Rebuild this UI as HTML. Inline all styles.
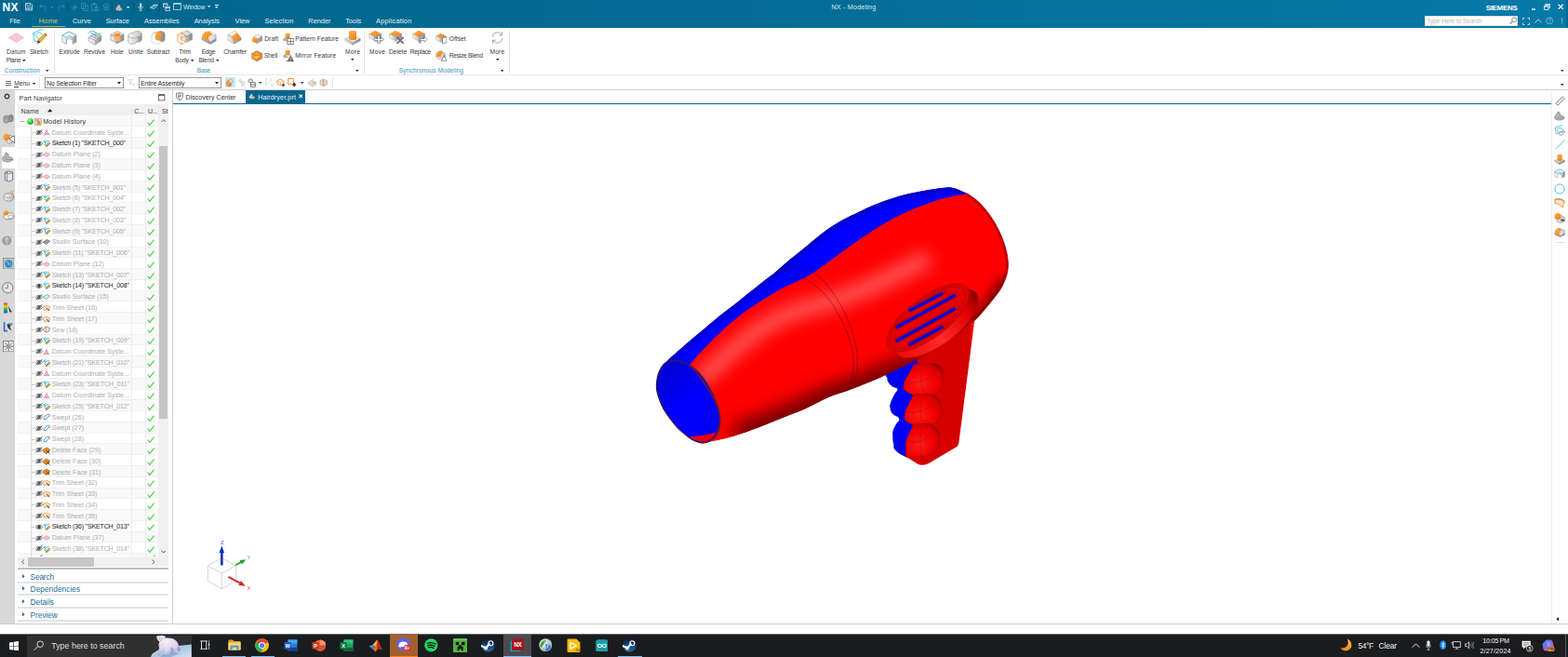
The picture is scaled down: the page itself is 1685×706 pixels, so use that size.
<!DOCTYPE html>
<html lang="en"><head><meta charset="utf-8"><title>NX - Modeling</title>
<style>
html,body{margin:0;padding:0}
body{width:1685px;height:706px;position:relative;overflow:hidden;background:#fff;font-family:"Liberation Sans",sans-serif;-webkit-font-smoothing:antialiased}
.a{position:absolute;display:block}
.t{position:absolute;white-space:nowrap;display:block}
</style></head>
<body>
<!-- top -->
<div class="a" style="left:0;top:0;width:1685px;height:30px;background:linear-gradient(90deg,#03678e 0%,#046b94 45%,#0679a7 100%)"></div>
<div class="a" style="left:1683px;top:0px;width:2.00px;height:30.00px;background:#04668c;"></div>
<span class="t" style="left:2.60px;top:1px;font-size:12px;color:#fff;font-weight:bold;letter-spacing:0.320px;">NX</span>
<div class="a" style="left:22.700000000000003px;top:2.6px;width:0.80px;height:9.80px;background:rgba(0,40,60,.32);"></div>
<div class="a" style="left:38.4px;top:2.6px;width:0.80px;height:9.80px;background:rgba(0,40,60,.32);"></div>
<div class="a" style="left:72.19999999999999px;top:2.6px;width:0.80px;height:9.80px;background:rgba(0,40,60,.32);"></div>
<div class="a" style="left:120.39999999999999px;top:2.6px;width:0.80px;height:9.80px;background:rgba(0,40,60,.32);"></div>
<div class="a" style="left:143.0px;top:2.6px;width:0.80px;height:9.80px;background:rgba(0,40,60,.32);"></div>
<div class="a" style="left:157.79999999999998px;top:2.6px;width:0.80px;height:9.80px;background:rgba(0,40,60,.32);"></div>
<div class="a" style="left:171.29999999999998px;top:2.6px;width:0.80px;height:9.80px;background:rgba(0,40,60,.32);"></div>
<svg class="a" style="left:27.4px;top:3.4px;" width="8" height="8.4" viewBox="0 0 8 8.4"><path d="M0.5 0.5H6L7.5 2V7.9H0.5Z" fill="none" stroke="#cfe4ee" stroke-width=".8"/><path d="M2 0.6V3H5.6V0.6M1.8 7.8V5H6.2V7.8" fill="none" stroke="#cfe4ee" stroke-width=".7"/><rect x="3.2" y="5.8" width="1.6" height="1.2" fill="#cfe4ee"/></svg>
<svg class="a" style="left:42px;top:3.6px;" width="8" height="8" viewBox="0 0 8 8"><path d="M2.6 0.8L0.8 2.8L2.8 4.6M0.8 2.8H4.6C8 2.8 8 7.2 4.6 7.2" fill="none" stroke="#3c8fb0" stroke-width=".8"/></svg>
<svg class="a" style="left:54.10px;top:6.65px" width="3" height="1.90" viewBox="0 0 10 6"><path d="M0 0H10L5 6Z" fill="#3c8fb0"/></svg>
<svg class="a" style="left:61.6px;top:3.6px;" width="8" height="8" viewBox="0 0 8 8"><path d="M5.4 0.8L7.2 2.8L5.2 4.6M7.2 2.8H3.4C0 2.8 0 7.2 3.4 7.2" fill="none" stroke="#3c8fb0" stroke-width=".8"/></svg>
<svg class="a" style="left:75.6px;top:3.6px;" width="8.4" height="8.4" viewBox="0 0 8.4 8.4"><path d="M0.6 4H7.8M4.2 0.8V7.6M2 6.6L6.4 1.6" fill="none" stroke="#3c8fb0" stroke-width=".8"/></svg>
<svg class="a" style="left:87px;top:3.2px;" width="8.4" height="9" viewBox="0 0 8.4 9"><path d="M0.5 0.5H5V6.4H0.5ZM2.8 2.6H7.6V8.5H2.8Z" fill="none" stroke="#3c8fb0" stroke-width=".8"/></svg>
<svg class="a" style="left:98px;top:3.2px;" width="8.6" height="9" viewBox="0 0 8.6 9"><path d="M0.5 1.4H5.6V8.4H0.5ZM2 0.5H4.2V2H2ZM4 4.4H6.6L8 5.8V8.6H4Z" fill="none" stroke="#3c8fb0" stroke-width=".8"/></svg>
<svg class="a" style="left:109.6px;top:3.4px;" width="8.6" height="8.8" viewBox="0 0 8.6 8.8"><path d="M4.2 0.6L7.8 3.2L4.2 5.6L0.6 3.2ZM2 4.6V7.6H7V4.6M4.2 2.2V8" fill="none" stroke="#3c8fb0" stroke-width=".8"/></svg>
<svg class="a" style="left:123.6px;top:3.6px;" width="8" height="8" viewBox="0 0 8 8"><path d="M1 4.6C1.6 3 3 2.6 3.4 0.8C5 1 5.6 2.6 5 4C6.6 4.2 7.6 5.4 7.4 6.4C6 7.8 2.4 7.8 0.8 6.6C0.4 6 0.6 5.2 1 4.6Z" fill="#c9c4c0" stroke="#8e8a88" stroke-width=".5"/><path d="M2.6 5.2C4 6 6 6 7.2 5.6" stroke="#8e8a88" stroke-width=".5" fill="none"/></svg>
<svg class="a" style="left:136.10px;top:6.55px" width="3.4" height="2.10" viewBox="0 0 10 6"><path d="M0 0H10L5 6Z" fill="#e8f2f6"/></svg>
<svg class="a" style="left:147.6px;top:3.2px;" width="6.2" height="9.2" viewBox="0 0 6.2 9.2"><rect x="1.9" y="0.4" width="2.4" height="5" rx="1.2" fill="#cfe4ee"/><path d="M0.6 3.8C0.6 7.4 5.6 7.4 5.6 3.8M3.1 6.6V8.4M1.6 8.6H4.6" fill="none" stroke="#cfe4ee" stroke-width=".7"/></svg>
<svg class="a" style="left:160.8px;top:4.4px;" width="9" height="6.4" viewBox="0 0 9 6.4"><path d="M0.6 4L4.6 1.2H8.4L4.6 5.4ZM3 3.6L6 1.4" fill="none" stroke="#cfe4ee" stroke-width=".9"/></svg>
<svg class="a" style="left:175px;top:3.2px;" width="8.4" height="9" viewBox="0 0 8.4 9"><path d="M0.5 0.8H5V4.6H0.5ZM0.5 1.8H5M2.8 5.2V8.4H7.8V4.2H5.6" fill="none" stroke="#cfe4ee" stroke-width=".8"/><path d="M2.8 5.3H7.8" stroke="#cfe4ee" stroke-width="1.2"/></svg>
<svg class="a" style="left:185.8px;top:3px;" width="9" height="8" viewBox="0 0 9 8"><path d="M0.5 0.6H8.4V7.4H0.5Z" fill="none" stroke="#cfe4ee" stroke-width=".8"/><path d="M0.5 1H8.4" stroke="#cfe4ee" stroke-width="1.3"/></svg>
<svg class="a" style="left:223.30px;top:6.35px" width="3.4" height="2.10" viewBox="0 0 10 6"><path d="M0 0H10L5 6Z" fill="#d4e8f0"/></svg>
<div class="a" style="left:230.6px;top:5.2px;width:4.20px;height:0.70px;background:#e8f2f6;"></div>
<svg class="a" style="left:231.00px;top:6.95px" width="3.4" height="2.10" viewBox="0 0 10 6"><path d="M0 0H10L5 6Z" fill="#e8f2f6"/></svg>
<div class="a" style="left:1646.2px;top:9.4px;width:3.80px;height:1.20px;background:#a9cddd;"></div>
<svg class="a" style="left:1658.6px;top:3.6px;" width="7" height="7" viewBox="0 0 7 7"><path d="M0.5 2.4H5V6.4H0.5ZM1.8 2.2V0.6H6.4V4.6H5.2" fill="none" stroke="#e4f0f5" stroke-width=".9"/><path d="M0.5 2.8H5M1.8 0.9H6.4" stroke="#e4f0f5" stroke-width="1.2"/></svg>
<svg class="a" style="left:1674px;top:4px;" width="6.4" height="6.4" viewBox="0 0 6.4 6.4"><path d="M0.6 0.6L5.8 5.8M5.8 0.6L0.6 5.8" stroke="#fff" stroke-width="1.2"/></svg>
<svg class="a" style="left:1636px;top:18.6px;" width="8" height="8" viewBox="0 0 8 8"><path d="M0.5 2.4V0.5H2.4M5.6 0.5H7.5V2.4M7.5 5.6V7.5H5.6M2.4 7.5H0.5V5.6" fill="none" stroke="#cfe4ee" stroke-width=".9"/></svg>
<svg class="a" style="left:1648.6px;top:19.8px;" width="8.4" height="5" viewBox="0 0 8.4 5"><path d="M0.6 4.4L4.2 0.8L7.8 4.4" fill="none" stroke="#cfe4ee" stroke-width=".9"/></svg>
<svg class="a" style="left:1661px;top:18.4px;" width="8.4" height="8.4" viewBox="0 0 8.4 8.4"><circle cx="4.2" cy="4.2" r="3.5" fill="none" stroke="#86bbd3" stroke-width=".8"/><path d="M3 3.4C3 1.8 5.4 1.8 5.4 3.3C5.4 4.2 4.2 4.2 4.2 5.2M4.2 6V6.8" fill="none" stroke="#86bbd3" stroke-width=".8"/></svg>
<div class="a" style="left:1677.7px;top:18.6px;width:1.00px;height:5.40px;background:#6fb0cc;"></div>
<div class="a" style="left:1677.7px;top:25px;width:1.00px;height:1.20px;background:#6fb0cc;"></div>
<span class="t" style="left:197.00px;top:4px;font-size:6.8px;color:#d4e8f0;letter-spacing:-0.162px;">Window</span>
<span class="t" style="left:893.40px;top:3px;font-size:7.2px;color:#dcebf2;letter-spacing:0.199px;">NX - Modeling</span>
<span class="t" style="left:1596.66px;top:4px;font-size:8px;color:#fff;font-weight:bold;letter-spacing:-0.320px;">SIEMENS</span>
<span class="t" style="left:10.20px;top:18px;font-size:7.4px;color:#e6f1f6;letter-spacing:-0.111px;">File</span>
<span class="t" style="left:41.80px;top:18px;font-size:7.4px;color:#d9ca62;letter-spacing:0.220px;">Home</span>
<span class="t" style="left:77.90px;top:18px;font-size:7.4px;color:#e6f1f6;letter-spacing:0.090px;">Curve</span>
<span class="t" style="left:113.70px;top:18px;font-size:7.4px;color:#e6f1f6;letter-spacing:-0.035px;">Surface</span>
<span class="t" style="left:155.00px;top:18px;font-size:7.4px;color:#e6f1f6;">Assemblies</span>
<span class="t" style="left:208.70px;top:18px;font-size:7.4px;color:#e6f1f6;letter-spacing:-0.035px;">Analysis</span>
<span class="t" style="left:252.60px;top:18px;font-size:7.4px;color:#e6f1f6;letter-spacing:-0.009px;">View</span>
<span class="t" style="left:284.50px;top:18px;font-size:7.4px;color:#e6f1f6;letter-spacing:0.056px;">Selection</span>
<span class="t" style="left:331.30px;top:18px;font-size:7.4px;color:#e6f1f6;letter-spacing:0.006px;">Render</span>
<span class="t" style="left:371.20px;top:18px;font-size:7.4px;color:#e6f1f6;letter-spacing:-0.070px;">Tools</span>
<span class="t" style="left:404.00px;top:18px;font-size:7.4px;color:#e6f1f6;letter-spacing:0.210px;">Application</span>
<div class="a" style="left:33.5px;top:28.1px;width:36.70px;height:1.30px;background:#bfb152;"></div>
<div class="a" style="left:1531.2px;top:17px;width:99.80px;height:11.00px;background:#fff;box-shadow:inset 0 0 0 0.6px #d9c8bd;"></div>
<span class="t" style="left:1533.40px;top:19px;font-size:6.6px;color:#b9b9b9;letter-spacing:-0.074px;">Type Here to Search</span>
<svg class="a" style="left:1621.6px;top:18.4px;" width="8.4" height="8.4" viewBox="0 0 8.4 8.4"><circle cx="5.2" cy="3.2" r="2.5" fill="#f4f4f4" stroke="#8c8c8c" stroke-width=".9"/><path d="M3.4 5L0.8 7.6" stroke="#8c8c8c" stroke-width="1.3"/></svg>
<span class="t" style="left:7.05px;top:52px;font-size:6.6px;color:#3a3a3a;letter-spacing:0.264px;">Datum</span>
<span class="t" style="left:6.79px;top:61px;font-size:6.6px;color:#3a3a3a;letter-spacing:-0.264px;">Plane</span>
<span class="t" style="left:32.00px;top:52px;font-size:6.6px;color:#3a3a3a;letter-spacing:-0.036px;">Sketch</span>
<span class="t" style="left:63.60px;top:52px;font-size:6.6px;color:#3a3a3a;letter-spacing:-0.059px;">Extrude</span>
<span class="t" style="left:90.00px;top:52px;font-size:6.6px;color:#3a3a3a;letter-spacing:-0.107px;">Revolve</span>
<span class="t" style="left:119.00px;top:52px;font-size:6.6px;color:#3a3a3a;letter-spacing:0.007px;">Hole</span>
<span class="t" style="left:138.00px;top:52px;font-size:6.6px;color:#3a3a3a;letter-spacing:0.147px;">Unite</span>
<span class="t" style="left:157.80px;top:52px;font-size:6.6px;color:#3a3a3a;">Subtract</span>
<span class="t" style="left:192.20px;top:52px;font-size:6.6px;color:#3a3a3a;letter-spacing:-0.051px;">Trim</span>
<span class="t" style="left:188.20px;top:61px;font-size:6.6px;color:#3a3a3a;letter-spacing:-0.149px;">Body</span>
<span class="t" style="left:216.69px;top:52px;font-size:6.6px;color:#3a3a3a;letter-spacing:-0.264px;">Edge</span>
<span class="t" style="left:213.40px;top:61px;font-size:6.6px;color:#3a3a3a;letter-spacing:-0.070px;">Blend</span>
<span class="t" style="left:240.20px;top:52px;font-size:6.6px;color:#3a3a3a;letter-spacing:-0.085px;">Chamfer</span>
<span class="t" style="left:284.20px;top:38px;font-size:6.6px;color:#3a3a3a;letter-spacing:0.124px;">Draft</span>
<span class="t" style="left:284.00px;top:56px;font-size:6.6px;color:#3a3a3a;letter-spacing:-0.117px;">Shell</span>
<span class="t" style="left:317.20px;top:38px;font-size:6.6px;color:#3a3a3a;letter-spacing:0.068px;">Pattern Feature</span>
<span class="t" style="left:317.20px;top:56px;font-size:6.6px;color:#3a3a3a;letter-spacing:0.168px;">Mirror Feature</span>
<span class="t" style="left:371.09px;top:52px;font-size:6.6px;color:#3a3a3a;letter-spacing:0.264px;">More</span>
<span class="t" style="left:397.04px;top:52px;font-size:6.6px;color:#3a3a3a;letter-spacing:0.264px;">Move</span>
<span class="t" style="left:418.00px;top:52px;font-size:6.6px;color:#3a3a3a;letter-spacing:0.065px;">Delete</span>
<span class="t" style="left:440.68px;top:52px;font-size:6.6px;color:#3a3a3a;letter-spacing:-0.264px;">Replace</span>
<span class="t" style="left:482.80px;top:38px;font-size:6.6px;color:#3a3a3a;letter-spacing:0.062px;">Offset</span>
<span class="t" style="left:482.80px;top:56px;font-size:6.6px;color:#3a3a3a;letter-spacing:-0.245px;">Resize Blend</span>
<span class="t" style="left:526.39px;top:52px;font-size:6.6px;color:#3a3a3a;letter-spacing:0.264px;">More</span>
<span class="t" style="left:4.80px;top:72px;font-size:6.6px;color:#3a93b8;letter-spacing:0.104px;">Construction</span>
<span class="t" style="left:211.87px;top:72px;font-size:6.6px;color:#3a93b8;letter-spacing:-0.264px;">Base</span>
<span class="t" style="left:428.80px;top:72px;font-size:6.6px;color:#3a93b8;letter-spacing:0.108px;">Synchronous Modeling</span>
<svg class="a" style="left:24.20px;top:64.40px" width="3.6" height="2.20" viewBox="0 0 10 6"><path d="M0 0H10L5 6Z" fill="#333"/></svg>
<svg class="a" style="left:204.70px;top:64.40px" width="3.6" height="2.20" viewBox="0 0 10 6"><path d="M0 0H10L5 6Z" fill="#333"/></svg>
<svg class="a" style="left:231.60px;top:64.40px" width="3.6" height="2.20" viewBox="0 0 10 6"><path d="M0 0H10L5 6Z" fill="#333"/></svg>
<svg class="a" style="left:376.80px;top:63.30px" width="3.6" height="2.20" viewBox="0 0 10 6"><path d="M0 0H10L5 6Z" fill="#333"/></svg>
<svg class="a" style="left:532.60px;top:63.30px" width="3.6" height="2.20" viewBox="0 0 10 6"><path d="M0 0H10L5 6Z" fill="#333"/></svg>
<svg class="a" style="left:49.40px;top:74.50px" width="3.6" height="2.20" viewBox="0 0 10 6"><path d="M0 0H10L5 6Z" fill="#333"/></svg>
<svg class="a" style="left:382.40px;top:74.50px" width="3.6" height="2.20" viewBox="0 0 10 6"><path d="M0 0H10L5 6Z" fill="#333"/></svg>
<svg class="a" style="left:537.80px;top:74.50px" width="3.6" height="2.20" viewBox="0 0 10 6"><path d="M0 0H10L5 6Z" fill="#333"/></svg>
<svg class="a" style="left:1677.40px;top:74.70px" width="3.6" height="2.20" viewBox="0 0 10 6"><path d="M0 0H10L5 6Z" fill="#333"/></svg>
<svg class="a" style="left:1677.40px;top:89.70px" width="3.6" height="2.20" viewBox="0 0 10 6"><path d="M0 0H10L5 6Z" fill="#333"/></svg>
<div class="a" style="left:57.6px;top:33px;width:0.70px;height:45.50px;background:#e3e3e3;"></div>
<div class="a" style="left:390.6px;top:33px;width:0.70px;height:45.50px;background:#e3e3e3;"></div>
<div class="a" style="left:546.6px;top:33px;width:0.70px;height:45.50px;background:#e3e3e3;"></div>
<div class="a" style="left:0px;top:80.2px;width:1685.00px;height:0.80px;background:#e9e9e9;"></div>
<div class="a" style="left:0px;top:95.8px;width:1685.00px;height:1.00px;background:#cfcfcf;"></div>
<span class="t" style="left:15.20px;top:86px;font-size:6.6px;color:#333;letter-spacing:0.095px;">Menu</span>
<div class="a" style="left:15.2px;top:92.6px;width:4.40px;height:0.60px;background:#444;"></div>
<div class="a" style="left:6.2px;top:86.6px;width:5.40px;height:0.50px;background:#6a6a6a;"></div>
<div class="a" style="left:6.2px;top:88.69999999999999px;width:5.40px;height:0.50px;background:#6a6a6a;"></div>
<div class="a" style="left:6.2px;top:90.8px;width:5.40px;height:0.50px;background:#6a6a6a;"></div>
<svg class="a" style="left:34.80px;top:88.70px" width="3.6" height="2.20" viewBox="0 0 10 6"><path d="M0 0H10L5 6Z" fill="#333"/></svg>
<div class="a" style="left:42.4px;top:83px;width:0.70px;height:12.00px;background:#e3e3e3;"></div>
<div class="a" style="left:48.3px;top:82.6px;width:84.40px;height:12.00px;background:#fff;box-shadow:inset 0 0 0 0.8px #7a7a7a;"></div>
<span class="t" style="left:50.20px;top:86px;font-size:6.6px;color:#222;letter-spacing:-0.018px;">No Selection Filter</span>
<svg class="a" style="left:125.60px;top:88.20px" width="4" height="2.40" viewBox="0 0 10 6"><path d="M0 0H10L5 6Z" fill="#222"/></svg>
<div class="a" style="left:149.3px;top:82.6px;width:88.50px;height:12.00px;background:#fff;box-shadow:inset 0 0 0 0.8px #7a7a7a;"></div>
<span class="t" style="left:151.20px;top:86px;font-size:6.6px;color:#222;letter-spacing:-0.009px;">Entire Assembly</span>
<svg class="a" style="left:230.80px;top:88.20px" width="4" height="2.40" viewBox="0 0 10 6"><path d="M0 0H10L5 6Z" fill="#222"/></svg>
<div class="a" style="left:241.7px;top:83.3px;width:11.20px;height:10.50px;background:#cde6ee;"></div>
<svg class="a" style="left:277.90px;top:88.15px" width="3.4" height="2.10" viewBox="0 0 10 6"><path d="M0 0H10L5 6Z" fill="#333"/></svg>
<svg class="a" style="left:322.50px;top:88.15px" width="3.4" height="2.10" viewBox="0 0 10 6"><path d="M0 0H10L5 6Z" fill="#333"/></svg>
<div class="a" style="left:357.2px;top:83px;width:0.70px;height:11.50px;background:#e3e3e3;"></div>
<!-- nav -->
<div class="a" style="left:0px;top:96.8px;width:15.80px;height:573.60px;background:#d8d8d8;"></div>
<div class="a" style="left:1.6px;top:157.6px;width:15.00px;height:23.00px;background:#fff;"></div>
<div class="a" style="left:185.2px;top:96.8px;width:0.80px;height:573.60px;background:#cfcfcf;"></div>
<span class="t" style="left:20.60px;top:102px;font-size:7.1px;color:#444;letter-spacing:0.078px;">Part Navigator</span>
<svg class="a" style="left:170.4px;top:101.4px;" width="7.4" height="7.4" viewBox="0 0 7.4 7.4"><rect x=".5" y=".9" width="6.4" height="6" fill="#fff" stroke="#333" stroke-width=".7"/><path d="M.5 1.1H6.9" stroke="#333" stroke-width="1.1"/></svg>
<div class="a" style="left:19.4px;top:112.4px;width:161.40px;height:11.80px;background:#f0f0f0;"></div>
<span class="t" style="left:22.60px;top:116px;font-size:7.1px;color:#444;letter-spacing:0.154px;">Name</span>
<svg class="a" style="left:51px;top:117.4px;" width="5.4" height="3.4" viewBox="0 0 10 6"><path d="M0 6L5 0L10 6Z" fill="#222"/></svg>
<span class="t" style="left:144.31px;top:116px;font-size:7.1px;color:#444;letter-spacing:-0.284px;">C...</span>
<span class="t" style="left:159.01px;top:116px;font-size:7.1px;color:#444;letter-spacing:-0.284px;">U...</span>
<span class="t" style="left:173.99px;top:116px;font-size:7.1px;color:#444;letter-spacing:-0.284px;">St</span>
<div class="a" style="left:19.4px;top:123.31px;width:151.00px;height:11.77px;background:#f9f9f9;border-top:1px solid #f1f1f1;box-sizing:border-box;"></div>
<div class="a" style="left:22.4px;top:130.3px;width:3.60px;height:0.80px;background:#a8a8a8;"></div>
<svg class="a" style="left:29.4px;top:127.1px;" width="7.2" height="7.2" viewBox="0 0 7.2 7.2"><defs><radialGradient id="gb" cx=".38" cy=".32" r=".75"><stop offset="0" stop-color="#b8ffb0"/><stop offset=".45" stop-color="#3cd63a"/><stop offset="1" stop-color="#1f9a22"/></radialGradient></defs><circle cx="3.6" cy="3.6" r="3.4" fill="url(#gb)"/></svg>
<svg class="a" style="left:37.2px;top:126.7px;" width="7.6" height="8" viewBox="0 0 7.6 8"><rect x=".4" y=".4" width="6.8" height="7.2" fill="#e9e9e9" stroke="#999" stroke-width=".6"/><rect x="2.6" y="2.8" width="4" height="4.2" fill="#f28c1e"/><path d="M1.4 2H4.6" stroke="#c0392b" stroke-width=".9"/></svg>
<span class="t" style="left:46.20px;top:127px;font-size:7.1px;color:#333;letter-spacing:0.217px;">Model History</span>
<svg class="a" style="left:158.4px;top:127.8px;" width="8.4" height="7.6" viewBox="0 0 8.4 7.6"><path d="M0.7 3.6L2.9 6.4L7.6 0.7" stroke="#42d33f" stroke-width="1.1" fill="none"/></svg>
<div class="a" style="left:19.4px;top:135.08px;width:151.00px;height:11.77px;background:#fff;border-top:1px solid #f1f1f1;box-sizing:border-box;"></div>
<div class="a" style="left:33.6px;top:142.07px;width:3.60px;height:0.80px;background:#c8c8c8;"></div>
<svg class="a" style="left:37.8px;top:139.07px;" width="8" height="7" viewBox="0 0 8 7"><path d="M0.3 3.4C2 0.6 6 0.6 7.7 3.4C6 6 2 6 0.3 3.4Z" fill="#fff" stroke="#5a5a5a" stroke-width="0.8"/><circle cx="4" cy="3.3" r="1.7" fill="#5a5a5a"/><path d="M0.6 6.2L7.6 0.2" stroke="#5a5a5a" stroke-width="0.9"/></svg>
<svg class="a" style="left:46.2px;top:138.47px;" width="8" height="8" viewBox="0 0 8 8"><path d="M4 0.6V5.2M4 5.2L0.8 7M4 5.2L7.2 7M1.4 6.6L4 2L6.6 6.6Z" stroke="#e57fa6" stroke-width="0.8" fill="none"/></svg>
<span class="t" style="left:55.70px;top:139px;font-size:7.1px;color:#adadad;">Datum Coordinate Syste...</span>
<svg class="a" style="left:158.4px;top:139.57px;" width="8.4" height="7.6" viewBox="0 0 8.4 7.6"><path d="M0.7 3.6L2.9 6.4L7.6 0.7" stroke="#42d33f" stroke-width="1.1" fill="none"/></svg>
<div class="a" style="left:19.4px;top:146.85px;width:151.00px;height:11.77px;background:#f9f9f9;border-top:1px solid #f1f1f1;box-sizing:border-box;"></div>
<div class="a" style="left:33.6px;top:153.84px;width:3.60px;height:0.80px;background:#c8c8c8;"></div>
<svg class="a" style="left:37.8px;top:150.84px;" width="8" height="7" viewBox="0 0 8 7"><path d="M0.3 3.4C2 0.6 6 0.6 7.7 3.4C6 6 2 6 0.3 3.4Z" fill="#fff" stroke="#3c3c3c" stroke-width="0.8"/><circle cx="4" cy="3.3" r="1.7" fill="#3c3c3c"/></svg>
<svg class="a" style="left:46.2px;top:150.24px;" width="8" height="8" viewBox="0 0 8 8"><path d="M0.6 2.2L3.4 0.6M0.6 2.2L2.6 2.6L2.2 5.4L4.2 6.6M2.6 2.6L6.8 1.4" stroke="#35b5d8" stroke-width="0.9" fill="none"/><path d="M3.4 7.6L4 5.6L6.8 3L7.8 4.2L5.2 7Z" fill="#e8b020" stroke="#5a4a28" stroke-width="0.5"/></svg>
<span class="t" style="left:55.70px;top:150px;font-size:7.1px;color:#1c1c1c;letter-spacing:-0.212px;">Sketch (1) "SKETCH_000"</span>
<svg class="a" style="left:158.4px;top:151.34px;" width="8.4" height="7.6" viewBox="0 0 8.4 7.6"><path d="M0.7 3.6L2.9 6.4L7.6 0.7" stroke="#42d33f" stroke-width="1.1" fill="none"/></svg>
<div class="a" style="left:19.4px;top:158.62px;width:151.00px;height:11.78px;background:#fff;border-top:1px solid #f1f1f1;box-sizing:border-box;"></div>
<div class="a" style="left:33.6px;top:165.61px;width:3.60px;height:0.80px;background:#c8c8c8;"></div>
<svg class="a" style="left:37.8px;top:162.61px;" width="8" height="7" viewBox="0 0 8 7"><path d="M0.3 3.4C2 0.6 6 0.6 7.7 3.4C6 6 2 6 0.3 3.4Z" fill="#fff" stroke="#5a5a5a" stroke-width="0.8"/><circle cx="4" cy="3.3" r="1.7" fill="#5a5a5a"/><path d="M0.6 6.2L7.6 0.2" stroke="#5a5a5a" stroke-width="0.9"/></svg>
<svg class="a" style="left:46.2px;top:162.01px;" width="8" height="8" viewBox="0 0 8 8"><path d="M0.3 4L2.6 2.2Q4 1.4 5.4 2.2L7.7 4L5.4 5.8Q4 6.6 2.6 5.8Z" fill="#f4bfd4" stroke="#e893b6" stroke-width="0.7"/></svg>
<span class="t" style="left:55.70px;top:162px;font-size:7.1px;color:#adadad;letter-spacing:0.044px;">Datum Plane (2)</span>
<svg class="a" style="left:158.4px;top:163.11px;" width="8.4" height="7.6" viewBox="0 0 8.4 7.6"><path d="M0.7 3.6L2.9 6.4L7.6 0.7" stroke="#42d33f" stroke-width="1.1" fill="none"/></svg>
<div class="a" style="left:19.4px;top:170.39px;width:151.00px;height:11.77px;background:#f9f9f9;border-top:1px solid #f1f1f1;box-sizing:border-box;"></div>
<div class="a" style="left:33.6px;top:177.38px;width:3.60px;height:0.80px;background:#c8c8c8;"></div>
<svg class="a" style="left:37.8px;top:174.38px;" width="8" height="7" viewBox="0 0 8 7"><path d="M0.3 3.4C2 0.6 6 0.6 7.7 3.4C6 6 2 6 0.3 3.4Z" fill="#fff" stroke="#5a5a5a" stroke-width="0.8"/><circle cx="4" cy="3.3" r="1.7" fill="#5a5a5a"/><path d="M0.6 6.2L7.6 0.2" stroke="#5a5a5a" stroke-width="0.9"/></svg>
<svg class="a" style="left:46.2px;top:173.78px;" width="8" height="8" viewBox="0 0 8 8"><path d="M0.3 4L2.6 2.2Q4 1.4 5.4 2.2L7.7 4L5.4 5.8Q4 6.6 2.6 5.8Z" fill="#f4bfd4" stroke="#e893b6" stroke-width="0.7"/></svg>
<span class="t" style="left:55.70px;top:174px;font-size:7.1px;color:#adadad;letter-spacing:0.044px;">Datum Plane (3)</span>
<svg class="a" style="left:158.4px;top:174.88px;" width="8.4" height="7.6" viewBox="0 0 8.4 7.6"><path d="M0.7 3.6L2.9 6.4L7.6 0.7" stroke="#42d33f" stroke-width="1.1" fill="none"/></svg>
<div class="a" style="left:19.4px;top:182.16px;width:151.00px;height:11.77px;background:#fff;border-top:1px solid #f1f1f1;box-sizing:border-box;"></div>
<div class="a" style="left:33.6px;top:189.15px;width:3.60px;height:0.80px;background:#c8c8c8;"></div>
<svg class="a" style="left:37.8px;top:186.15px;" width="8" height="7" viewBox="0 0 8 7"><path d="M0.3 3.4C2 0.6 6 0.6 7.7 3.4C6 6 2 6 0.3 3.4Z" fill="#fff" stroke="#5a5a5a" stroke-width="0.8"/><circle cx="4" cy="3.3" r="1.7" fill="#5a5a5a"/><path d="M0.6 6.2L7.6 0.2" stroke="#5a5a5a" stroke-width="0.9"/></svg>
<svg class="a" style="left:46.2px;top:185.55px;" width="8" height="8" viewBox="0 0 8 8"><path d="M0.3 4L2.6 2.2Q4 1.4 5.4 2.2L7.7 4L5.4 5.8Q4 6.6 2.6 5.8Z" fill="#f4bfd4" stroke="#e893b6" stroke-width="0.7"/></svg>
<span class="t" style="left:55.70px;top:186px;font-size:7.1px;color:#adadad;letter-spacing:0.044px;">Datum Plane (4)</span>
<svg class="a" style="left:158.4px;top:186.65px;" width="8.4" height="7.6" viewBox="0 0 8.4 7.6"><path d="M0.7 3.6L2.9 6.4L7.6 0.7" stroke="#42d33f" stroke-width="1.1" fill="none"/></svg>
<div class="a" style="left:19.4px;top:193.94px;width:151.00px;height:11.77px;background:#f9f9f9;border-top:1px solid #f1f1f1;box-sizing:border-box;"></div>
<div class="a" style="left:33.6px;top:200.92px;width:3.60px;height:0.80px;background:#c8c8c8;"></div>
<svg class="a" style="left:37.8px;top:197.92px;" width="8" height="7" viewBox="0 0 8 7"><path d="M0.3 3.4C2 0.6 6 0.6 7.7 3.4C6 6 2 6 0.3 3.4Z" fill="#fff" stroke="#5a5a5a" stroke-width="0.8"/><circle cx="4" cy="3.3" r="1.7" fill="#5a5a5a"/><path d="M0.6 6.2L7.6 0.2" stroke="#5a5a5a" stroke-width="0.9"/></svg>
<svg class="a" style="left:46.2px;top:197.32px;" width="8" height="8" viewBox="0 0 8 8"><path d="M0.6 2.2L3.4 0.6M0.6 2.2L2.6 2.6L2.2 5.4L4.2 6.6M2.6 2.6L6.8 1.4" stroke="#35b5d8" stroke-width="0.9" fill="none"/><path d="M3.4 7.6L4 5.6L6.8 3L7.8 4.2L5.2 7Z" fill="#e8b020" stroke="#5a4a28" stroke-width="0.5"/></svg>
<span class="t" style="left:55.70px;top:198px;font-size:7.1px;color:#adadad;letter-spacing:-0.212px;">Sketch (5) "SKETCH_001"</span>
<svg class="a" style="left:158.4px;top:198.42px;" width="8.4" height="7.6" viewBox="0 0 8.4 7.6"><path d="M0.7 3.6L2.9 6.4L7.6 0.7" stroke="#42d33f" stroke-width="1.1" fill="none"/></svg>
<div class="a" style="left:19.4px;top:205.7px;width:151.00px;height:11.77px;background:#fff;border-top:1px solid #f1f1f1;box-sizing:border-box;"></div>
<div class="a" style="left:33.6px;top:212.69px;width:3.60px;height:0.80px;background:#c8c8c8;"></div>
<svg class="a" style="left:37.8px;top:209.69px;" width="8" height="7" viewBox="0 0 8 7"><path d="M0.3 3.4C2 0.6 6 0.6 7.7 3.4C6 6 2 6 0.3 3.4Z" fill="#fff" stroke="#5a5a5a" stroke-width="0.8"/><circle cx="4" cy="3.3" r="1.7" fill="#5a5a5a"/><path d="M0.6 6.2L7.6 0.2" stroke="#5a5a5a" stroke-width="0.9"/></svg>
<svg class="a" style="left:46.2px;top:209.09px;" width="8" height="8" viewBox="0 0 8 8"><path d="M0.6 2.2L3.4 0.6M0.6 2.2L2.6 2.6L2.2 5.4L4.2 6.6M2.6 2.6L6.8 1.4" stroke="#35b5d8" stroke-width="0.9" fill="none"/><path d="M3.4 7.6L4 5.6L6.8 3L7.8 4.2L5.2 7Z" fill="#e8b020" stroke="#5a4a28" stroke-width="0.5"/></svg>
<span class="t" style="left:55.70px;top:209px;font-size:7.1px;color:#adadad;letter-spacing:-0.212px;">Sketch (6) "SKETCH_004"</span>
<svg class="a" style="left:158.4px;top:210.19px;" width="8.4" height="7.6" viewBox="0 0 8.4 7.6"><path d="M0.7 3.6L2.9 6.4L7.6 0.7" stroke="#42d33f" stroke-width="1.1" fill="none"/></svg>
<div class="a" style="left:19.4px;top:217.47px;width:151.00px;height:11.77px;background:#f9f9f9;border-top:1px solid #f1f1f1;box-sizing:border-box;"></div>
<div class="a" style="left:33.6px;top:224.46px;width:3.60px;height:0.80px;background:#c8c8c8;"></div>
<svg class="a" style="left:37.8px;top:221.46px;" width="8" height="7" viewBox="0 0 8 7"><path d="M0.3 3.4C2 0.6 6 0.6 7.7 3.4C6 6 2 6 0.3 3.4Z" fill="#fff" stroke="#5a5a5a" stroke-width="0.8"/><circle cx="4" cy="3.3" r="1.7" fill="#5a5a5a"/><path d="M0.6 6.2L7.6 0.2" stroke="#5a5a5a" stroke-width="0.9"/></svg>
<svg class="a" style="left:46.2px;top:220.86px;" width="8" height="8" viewBox="0 0 8 8"><path d="M0.6 2.2L3.4 0.6M0.6 2.2L2.6 2.6L2.2 5.4L4.2 6.6M2.6 2.6L6.8 1.4" stroke="#35b5d8" stroke-width="0.9" fill="none"/><path d="M3.4 7.6L4 5.6L6.8 3L7.8 4.2L5.2 7Z" fill="#e8b020" stroke="#5a4a28" stroke-width="0.5"/></svg>
<span class="t" style="left:55.70px;top:221px;font-size:7.1px;color:#adadad;letter-spacing:-0.212px;">Sketch (7) "SKETCH_002"</span>
<svg class="a" style="left:158.4px;top:221.96px;" width="8.4" height="7.6" viewBox="0 0 8.4 7.6"><path d="M0.7 3.6L2.9 6.4L7.6 0.7" stroke="#42d33f" stroke-width="1.1" fill="none"/></svg>
<div class="a" style="left:19.4px;top:229.24px;width:151.00px;height:11.77px;background:#fff;border-top:1px solid #f1f1f1;box-sizing:border-box;"></div>
<div class="a" style="left:33.6px;top:236.23px;width:3.60px;height:0.80px;background:#c8c8c8;"></div>
<svg class="a" style="left:37.8px;top:233.23px;" width="8" height="7" viewBox="0 0 8 7"><path d="M0.3 3.4C2 0.6 6 0.6 7.7 3.4C6 6 2 6 0.3 3.4Z" fill="#fff" stroke="#5a5a5a" stroke-width="0.8"/><circle cx="4" cy="3.3" r="1.7" fill="#5a5a5a"/><path d="M0.6 6.2L7.6 0.2" stroke="#5a5a5a" stroke-width="0.9"/></svg>
<svg class="a" style="left:46.2px;top:232.63px;" width="8" height="8" viewBox="0 0 8 8"><path d="M0.6 2.2L3.4 0.6M0.6 2.2L2.6 2.6L2.2 5.4L4.2 6.6M2.6 2.6L6.8 1.4" stroke="#35b5d8" stroke-width="0.9" fill="none"/><path d="M3.4 7.6L4 5.6L6.8 3L7.8 4.2L5.2 7Z" fill="#e8b020" stroke="#5a4a28" stroke-width="0.5"/></svg>
<span class="t" style="left:55.70px;top:233px;font-size:7.1px;color:#adadad;letter-spacing:-0.212px;">Sketch (8) "SKETCH_003"</span>
<svg class="a" style="left:158.4px;top:233.73px;" width="8.4" height="7.6" viewBox="0 0 8.4 7.6"><path d="M0.7 3.6L2.9 6.4L7.6 0.7" stroke="#42d33f" stroke-width="1.1" fill="none"/></svg>
<div class="a" style="left:19.4px;top:241.01px;width:151.00px;height:11.77px;background:#f9f9f9;border-top:1px solid #f1f1f1;box-sizing:border-box;"></div>
<div class="a" style="left:33.6px;top:248.0px;width:3.60px;height:0.80px;background:#c8c8c8;"></div>
<svg class="a" style="left:37.8px;top:245.0px;" width="8" height="7" viewBox="0 0 8 7"><path d="M0.3 3.4C2 0.6 6 0.6 7.7 3.4C6 6 2 6 0.3 3.4Z" fill="#fff" stroke="#5a5a5a" stroke-width="0.8"/><circle cx="4" cy="3.3" r="1.7" fill="#5a5a5a"/><path d="M0.6 6.2L7.6 0.2" stroke="#5a5a5a" stroke-width="0.9"/></svg>
<svg class="a" style="left:46.2px;top:244.4px;" width="8" height="8" viewBox="0 0 8 8"><path d="M0.6 2.2L3.4 0.6M0.6 2.2L2.6 2.6L2.2 5.4L4.2 6.6M2.6 2.6L6.8 1.4" stroke="#35b5d8" stroke-width="0.9" fill="none"/><path d="M3.4 7.6L4 5.6L6.8 3L7.8 4.2L5.2 7Z" fill="#e8b020" stroke="#5a4a28" stroke-width="0.5"/></svg>
<span class="t" style="left:55.70px;top:245px;font-size:7.1px;color:#adadad;letter-spacing:-0.212px;">Sketch (9) "SKETCH_005"</span>
<svg class="a" style="left:158.4px;top:245.5px;" width="8.4" height="7.6" viewBox="0 0 8.4 7.6"><path d="M0.7 3.6L2.9 6.4L7.6 0.7" stroke="#42d33f" stroke-width="1.1" fill="none"/></svg>
<div class="a" style="left:19.4px;top:252.78px;width:151.00px;height:11.77px;background:#fff;border-top:1px solid #f1f1f1;box-sizing:border-box;"></div>
<div class="a" style="left:33.6px;top:259.77px;width:3.60px;height:0.80px;background:#c8c8c8;"></div>
<svg class="a" style="left:37.8px;top:256.77px;" width="8" height="7" viewBox="0 0 8 7"><path d="M0.3 3.4C2 0.6 6 0.6 7.7 3.4C6 6 2 6 0.3 3.4Z" fill="#fff" stroke="#5a5a5a" stroke-width="0.8"/><circle cx="4" cy="3.3" r="1.7" fill="#5a5a5a"/><path d="M0.6 6.2L7.6 0.2" stroke="#5a5a5a" stroke-width="0.9"/></svg>
<svg class="a" style="left:46.2px;top:256.17px;" width="8" height="8" viewBox="0 0 8 8"><path d="M0.4 4.4L4.4 1.4L7.8 3.2L3.8 6.6Z" fill="#bdbdbd" stroke="#555" stroke-width="0.7"/><path d="M2.2 3L6 5M1.4 5.2L5.6 2" stroke="#555" stroke-width="0.5"/></svg>
<span class="t" style="left:55.70px;top:256px;font-size:7.1px;color:#adadad;letter-spacing:0.007px;">Studio Surface (10)</span>
<svg class="a" style="left:158.4px;top:257.27px;" width="8.4" height="7.6" viewBox="0 0 8.4 7.6"><path d="M0.7 3.6L2.9 6.4L7.6 0.7" stroke="#42d33f" stroke-width="1.1" fill="none"/></svg>
<div class="a" style="left:19.4px;top:264.56px;width:151.00px;height:11.76px;background:#f9f9f9;border-top:1px solid #f1f1f1;box-sizing:border-box;"></div>
<div class="a" style="left:33.6px;top:271.54px;width:3.60px;height:0.80px;background:#c8c8c8;"></div>
<svg class="a" style="left:37.8px;top:268.54px;" width="8" height="7" viewBox="0 0 8 7"><path d="M0.3 3.4C2 0.6 6 0.6 7.7 3.4C6 6 2 6 0.3 3.4Z" fill="#fff" stroke="#5a5a5a" stroke-width="0.8"/><circle cx="4" cy="3.3" r="1.7" fill="#5a5a5a"/><path d="M0.6 6.2L7.6 0.2" stroke="#5a5a5a" stroke-width="0.9"/></svg>
<svg class="a" style="left:46.2px;top:267.94px;" width="8" height="8" viewBox="0 0 8 8"><path d="M0.6 2.2L3.4 0.6M0.6 2.2L2.6 2.6L2.2 5.4L4.2 6.6M2.6 2.6L6.8 1.4" stroke="#35b5d8" stroke-width="0.9" fill="none"/><path d="M3.4 7.6L4 5.6L6.8 3L7.8 4.2L5.2 7Z" fill="#e8b020" stroke="#5a4a28" stroke-width="0.5"/></svg>
<span class="t" style="left:55.70px;top:268px;font-size:7.1px;color:#adadad;letter-spacing:-0.173px;">Sketch (11) "SKETCH_006"</span>
<svg class="a" style="left:158.4px;top:269.04px;" width="8.4" height="7.6" viewBox="0 0 8.4 7.6"><path d="M0.7 3.6L2.9 6.4L7.6 0.7" stroke="#42d33f" stroke-width="1.1" fill="none"/></svg>
<div class="a" style="left:19.4px;top:276.32px;width:151.00px;height:11.77px;background:#fff;border-top:1px solid #f1f1f1;box-sizing:border-box;"></div>
<div class="a" style="left:33.6px;top:283.31px;width:3.60px;height:0.80px;background:#c8c8c8;"></div>
<svg class="a" style="left:37.8px;top:280.31px;" width="8" height="7" viewBox="0 0 8 7"><path d="M0.3 3.4C2 0.6 6 0.6 7.7 3.4C6 6 2 6 0.3 3.4Z" fill="#fff" stroke="#5a5a5a" stroke-width="0.8"/><circle cx="4" cy="3.3" r="1.7" fill="#5a5a5a"/><path d="M0.6 6.2L7.6 0.2" stroke="#5a5a5a" stroke-width="0.9"/></svg>
<svg class="a" style="left:46.2px;top:279.71px;" width="8" height="8" viewBox="0 0 8 8"><path d="M0.3 4L2.6 2.2Q4 1.4 5.4 2.2L7.7 4L5.4 5.8Q4 6.6 2.6 5.8Z" fill="#f4bfd4" stroke="#e893b6" stroke-width="0.7"/></svg>
<span class="t" style="left:55.70px;top:280px;font-size:7.1px;color:#adadad;letter-spacing:0.044px;">Datum Plane (12)</span>
<svg class="a" style="left:158.4px;top:280.81px;" width="8.4" height="7.6" viewBox="0 0 8.4 7.6"><path d="M0.7 3.6L2.9 6.4L7.6 0.7" stroke="#42d33f" stroke-width="1.1" fill="none"/></svg>
<div class="a" style="left:19.4px;top:288.09px;width:151.00px;height:11.77px;background:#f9f9f9;border-top:1px solid #f1f1f1;box-sizing:border-box;"></div>
<div class="a" style="left:33.6px;top:295.08px;width:3.60px;height:0.80px;background:#c8c8c8;"></div>
<svg class="a" style="left:37.8px;top:292.08px;" width="8" height="7" viewBox="0 0 8 7"><path d="M0.3 3.4C2 0.6 6 0.6 7.7 3.4C6 6 2 6 0.3 3.4Z" fill="#fff" stroke="#5a5a5a" stroke-width="0.8"/><circle cx="4" cy="3.3" r="1.7" fill="#5a5a5a"/><path d="M0.6 6.2L7.6 0.2" stroke="#5a5a5a" stroke-width="0.9"/></svg>
<svg class="a" style="left:46.2px;top:291.48px;" width="8" height="8" viewBox="0 0 8 8"><path d="M0.6 2.2L3.4 0.6M0.6 2.2L2.6 2.6L2.2 5.4L4.2 6.6M2.6 2.6L6.8 1.4" stroke="#35b5d8" stroke-width="0.9" fill="none"/><path d="M3.4 7.6L4 5.6L6.8 3L7.8 4.2L5.2 7Z" fill="#e8b020" stroke="#5a4a28" stroke-width="0.5"/></svg>
<span class="t" style="left:55.70px;top:292px;font-size:7.1px;color:#adadad;letter-spacing:-0.196px;">Sketch (13) "SKETCH_007"</span>
<svg class="a" style="left:158.4px;top:292.58px;" width="8.4" height="7.6" viewBox="0 0 8.4 7.6"><path d="M0.7 3.6L2.9 6.4L7.6 0.7" stroke="#42d33f" stroke-width="1.1" fill="none"/></svg>
<div class="a" style="left:19.4px;top:299.86px;width:151.00px;height:11.77px;background:#fff;border-top:1px solid #f1f1f1;box-sizing:border-box;"></div>
<div class="a" style="left:33.6px;top:306.85px;width:3.60px;height:0.80px;background:#c8c8c8;"></div>
<svg class="a" style="left:37.8px;top:303.85px;" width="8" height="7" viewBox="0 0 8 7"><path d="M0.3 3.4C2 0.6 6 0.6 7.7 3.4C6 6 2 6 0.3 3.4Z" fill="#fff" stroke="#3c3c3c" stroke-width="0.8"/><circle cx="4" cy="3.3" r="1.7" fill="#3c3c3c"/></svg>
<svg class="a" style="left:46.2px;top:303.25px;" width="8" height="8" viewBox="0 0 8 8"><path d="M0.6 2.2L3.4 0.6M0.6 2.2L2.6 2.6L2.2 5.4L4.2 6.6M2.6 2.6L6.8 1.4" stroke="#35b5d8" stroke-width="0.9" fill="none"/><path d="M3.4 7.6L4 5.6L6.8 3L7.8 4.2L5.2 7Z" fill="#e8b020" stroke="#5a4a28" stroke-width="0.5"/></svg>
<span class="t" style="left:55.70px;top:303px;font-size:7.1px;color:#1c1c1c;letter-spacing:-0.196px;">Sketch (14) "SKETCH_008"</span>
<svg class="a" style="left:158.4px;top:304.35px;" width="8.4" height="7.6" viewBox="0 0 8.4 7.6"><path d="M0.7 3.6L2.9 6.4L7.6 0.7" stroke="#42d33f" stroke-width="1.1" fill="none"/></svg>
<div class="a" style="left:19.4px;top:311.63px;width:151.00px;height:11.77px;background:#f9f9f9;border-top:1px solid #f1f1f1;box-sizing:border-box;"></div>
<div class="a" style="left:33.6px;top:318.62px;width:3.60px;height:0.80px;background:#c8c8c8;"></div>
<svg class="a" style="left:37.8px;top:315.62px;" width="8" height="7" viewBox="0 0 8 7"><path d="M0.3 3.4C2 0.6 6 0.6 7.7 3.4C6 6 2 6 0.3 3.4Z" fill="#fff" stroke="#5a5a5a" stroke-width="0.8"/><circle cx="4" cy="3.3" r="1.7" fill="#5a5a5a"/><path d="M0.6 6.2L7.6 0.2" stroke="#5a5a5a" stroke-width="0.9"/></svg>
<svg class="a" style="left:46.2px;top:315.02px;" width="8" height="8" viewBox="0 0 8 8"><path d="M0.4 4.4L4.4 1.6L7.8 3.4L3.8 6.4Z" fill="#e4f4f2" stroke="#4bb3a4" stroke-width="0.8"/></svg>
<span class="t" style="left:55.70px;top:315px;font-size:7.1px;color:#adadad;letter-spacing:0.007px;">Studio Surface (15)</span>
<svg class="a" style="left:158.4px;top:316.12px;" width="8.4" height="7.6" viewBox="0 0 8.4 7.6"><path d="M0.7 3.6L2.9 6.4L7.6 0.7" stroke="#42d33f" stroke-width="1.1" fill="none"/></svg>
<div class="a" style="left:19.4px;top:323.4px;width:151.00px;height:11.77px;background:#fff;border-top:1px solid #f1f1f1;box-sizing:border-box;"></div>
<div class="a" style="left:33.6px;top:330.39px;width:3.60px;height:0.80px;background:#c8c8c8;"></div>
<svg class="a" style="left:37.8px;top:327.39px;" width="8" height="7" viewBox="0 0 8 7"><path d="M0.3 3.4C2 0.6 6 0.6 7.7 3.4C6 6 2 6 0.3 3.4Z" fill="#fff" stroke="#5a5a5a" stroke-width="0.8"/><circle cx="4" cy="3.3" r="1.7" fill="#5a5a5a"/><path d="M0.6 6.2L7.6 0.2" stroke="#5a5a5a" stroke-width="0.9"/></svg>
<svg class="a" style="left:46.2px;top:326.79px;" width="8" height="8" viewBox="0 0 8 8"><path d="M0.6 2.4Q4 0.6 7.4 2.6L6.4 6.6Q4 5 1.6 6.4Z" fill="#fff" stroke="#f08a1c" stroke-width="0.9"/><path d="M3.6 3.4L7 6.8" stroke="#666" stroke-width="1.1"/></svg>
<span class="t" style="left:55.70px;top:327px;font-size:7.1px;color:#adadad;letter-spacing:-0.026px;">Trim Sheet (16)</span>
<svg class="a" style="left:158.4px;top:327.89px;" width="8.4" height="7.6" viewBox="0 0 8.4 7.6"><path d="M0.7 3.6L2.9 6.4L7.6 0.7" stroke="#42d33f" stroke-width="1.1" fill="none"/></svg>
<div class="a" style="left:19.4px;top:335.17px;width:151.00px;height:11.77px;background:#f9f9f9;border-top:1px solid #f1f1f1;box-sizing:border-box;"></div>
<div class="a" style="left:33.6px;top:342.16px;width:3.60px;height:0.80px;background:#c8c8c8;"></div>
<svg class="a" style="left:37.8px;top:339.16px;" width="8" height="7" viewBox="0 0 8 7"><path d="M0.3 3.4C2 0.6 6 0.6 7.7 3.4C6 6 2 6 0.3 3.4Z" fill="#fff" stroke="#5a5a5a" stroke-width="0.8"/><circle cx="4" cy="3.3" r="1.7" fill="#5a5a5a"/><path d="M0.6 6.2L7.6 0.2" stroke="#5a5a5a" stroke-width="0.9"/></svg>
<svg class="a" style="left:46.2px;top:338.56px;" width="8" height="8" viewBox="0 0 8 8"><path d="M0.6 2.4Q4 0.6 7.4 2.6L6.4 6.6Q4 5 1.6 6.4Z" fill="#fff" stroke="#f08a1c" stroke-width="0.9"/><path d="M3.6 3.4L7 6.8" stroke="#666" stroke-width="1.1"/></svg>
<span class="t" style="left:55.70px;top:339px;font-size:7.1px;color:#adadad;letter-spacing:-0.026px;">Trim Sheet (17)</span>
<svg class="a" style="left:158.4px;top:339.66px;" width="8.4" height="7.6" viewBox="0 0 8.4 7.6"><path d="M0.7 3.6L2.9 6.4L7.6 0.7" stroke="#42d33f" stroke-width="1.1" fill="none"/></svg>
<div class="a" style="left:19.4px;top:346.94px;width:151.00px;height:11.77px;background:#fff;border-top:1px solid #f1f1f1;box-sizing:border-box;"></div>
<div class="a" style="left:33.6px;top:353.93px;width:3.60px;height:0.80px;background:#c8c8c8;"></div>
<svg class="a" style="left:37.8px;top:350.93px;" width="8" height="7" viewBox="0 0 8 7"><path d="M0.3 3.4C2 0.6 6 0.6 7.7 3.4C6 6 2 6 0.3 3.4Z" fill="#fff" stroke="#5a5a5a" stroke-width="0.8"/><circle cx="4" cy="3.3" r="1.7" fill="#5a5a5a"/><path d="M0.6 6.2L7.6 0.2" stroke="#5a5a5a" stroke-width="0.9"/></svg>
<svg class="a" style="left:46.2px;top:350.33px;" width="8" height="8" viewBox="0 0 8 8"><path d="M0.6 3L3.6 1L7.4 2.6L6.6 6L3.4 7L1 5.6Z" fill="#eee" stroke="#666" stroke-width="0.7"/><path d="M3.6 1L3.4 7" stroke="#f08a1c" stroke-width="0.8"/></svg>
<span class="t" style="left:55.70px;top:351px;font-size:7.1px;color:#adadad;letter-spacing:-0.103px;">Sew (18)</span>
<svg class="a" style="left:158.4px;top:351.43px;" width="8.4" height="7.6" viewBox="0 0 8.4 7.6"><path d="M0.7 3.6L2.9 6.4L7.6 0.7" stroke="#42d33f" stroke-width="1.1" fill="none"/></svg>
<div class="a" style="left:19.4px;top:358.71px;width:151.00px;height:11.77px;background:#f9f9f9;border-top:1px solid #f1f1f1;box-sizing:border-box;"></div>
<div class="a" style="left:33.6px;top:365.7px;width:3.60px;height:0.80px;background:#c8c8c8;"></div>
<svg class="a" style="left:37.8px;top:362.7px;" width="8" height="7" viewBox="0 0 8 7"><path d="M0.3 3.4C2 0.6 6 0.6 7.7 3.4C6 6 2 6 0.3 3.4Z" fill="#fff" stroke="#5a5a5a" stroke-width="0.8"/><circle cx="4" cy="3.3" r="1.7" fill="#5a5a5a"/><path d="M0.6 6.2L7.6 0.2" stroke="#5a5a5a" stroke-width="0.9"/></svg>
<svg class="a" style="left:46.2px;top:362.1px;" width="8" height="8" viewBox="0 0 8 8"><path d="M0.6 2.2L3.4 0.6M0.6 2.2L2.6 2.6L2.2 5.4L4.2 6.6M2.6 2.6L6.8 1.4" stroke="#35b5d8" stroke-width="0.9" fill="none"/><path d="M3.4 7.6L4 5.6L6.8 3L7.8 4.2L5.2 7Z" fill="#e8b020" stroke="#5a4a28" stroke-width="0.5"/></svg>
<span class="t" style="left:55.70px;top:362px;font-size:7.1px;color:#adadad;letter-spacing:-0.196px;">Sketch (19) "SKETCH_009"</span>
<svg class="a" style="left:158.4px;top:363.2px;" width="8.4" height="7.6" viewBox="0 0 8.4 7.6"><path d="M0.7 3.6L2.9 6.4L7.6 0.7" stroke="#42d33f" stroke-width="1.1" fill="none"/></svg>
<div class="a" style="left:19.4px;top:370.48px;width:151.00px;height:11.77px;background:#fff;border-top:1px solid #f1f1f1;box-sizing:border-box;"></div>
<div class="a" style="left:33.6px;top:377.47px;width:3.60px;height:0.80px;background:#c8c8c8;"></div>
<svg class="a" style="left:37.8px;top:374.47px;" width="8" height="7" viewBox="0 0 8 7"><path d="M0.3 3.4C2 0.6 6 0.6 7.7 3.4C6 6 2 6 0.3 3.4Z" fill="#fff" stroke="#5a5a5a" stroke-width="0.8"/><circle cx="4" cy="3.3" r="1.7" fill="#5a5a5a"/><path d="M0.6 6.2L7.6 0.2" stroke="#5a5a5a" stroke-width="0.9"/></svg>
<svg class="a" style="left:46.2px;top:373.87px;" width="8" height="8" viewBox="0 0 8 8"><path d="M4 0.6V5.2M4 5.2L0.8 7M4 5.2L7.2 7M1.4 6.6L4 2L6.6 6.6Z" stroke="#e57fa6" stroke-width="0.8" fill="none"/></svg>
<span class="t" style="left:55.70px;top:374px;font-size:7.1px;color:#adadad;">Datum Coordinate Syste...</span>
<svg class="a" style="left:158.4px;top:374.97px;" width="8.4" height="7.6" viewBox="0 0 8.4 7.6"><path d="M0.7 3.6L2.9 6.4L7.6 0.7" stroke="#42d33f" stroke-width="1.1" fill="none"/></svg>
<div class="a" style="left:19.4px;top:382.25px;width:151.00px;height:11.77px;background:#f9f9f9;border-top:1px solid #f1f1f1;box-sizing:border-box;"></div>
<div class="a" style="left:33.6px;top:389.24px;width:3.60px;height:0.80px;background:#c8c8c8;"></div>
<svg class="a" style="left:37.8px;top:386.24px;" width="8" height="7" viewBox="0 0 8 7"><path d="M0.3 3.4C2 0.6 6 0.6 7.7 3.4C6 6 2 6 0.3 3.4Z" fill="#fff" stroke="#5a5a5a" stroke-width="0.8"/><circle cx="4" cy="3.3" r="1.7" fill="#5a5a5a"/><path d="M0.6 6.2L7.6 0.2" stroke="#5a5a5a" stroke-width="0.9"/></svg>
<svg class="a" style="left:46.2px;top:385.64px;" width="8" height="8" viewBox="0 0 8 8"><path d="M0.6 2.2L3.4 0.6M0.6 2.2L2.6 2.6L2.2 5.4L4.2 6.6M2.6 2.6L6.8 1.4" stroke="#35b5d8" stroke-width="0.9" fill="none"/><path d="M3.4 7.6L4 5.6L6.8 3L7.8 4.2L5.2 7Z" fill="#e8b020" stroke="#5a4a28" stroke-width="0.5"/></svg>
<span class="t" style="left:55.70px;top:386px;font-size:7.1px;color:#adadad;letter-spacing:-0.196px;">Sketch (21) "SKETCH_010"</span>
<svg class="a" style="left:158.4px;top:386.74px;" width="8.4" height="7.6" viewBox="0 0 8.4 7.6"><path d="M0.7 3.6L2.9 6.4L7.6 0.7" stroke="#42d33f" stroke-width="1.1" fill="none"/></svg>
<div class="a" style="left:19.4px;top:394.02px;width:151.00px;height:11.77px;background:#fff;border-top:1px solid #f1f1f1;box-sizing:border-box;"></div>
<div class="a" style="left:33.6px;top:401.01px;width:3.60px;height:0.80px;background:#c8c8c8;"></div>
<svg class="a" style="left:37.8px;top:398.01px;" width="8" height="7" viewBox="0 0 8 7"><path d="M0.3 3.4C2 0.6 6 0.6 7.7 3.4C6 6 2 6 0.3 3.4Z" fill="#fff" stroke="#5a5a5a" stroke-width="0.8"/><circle cx="4" cy="3.3" r="1.7" fill="#5a5a5a"/><path d="M0.6 6.2L7.6 0.2" stroke="#5a5a5a" stroke-width="0.9"/></svg>
<svg class="a" style="left:46.2px;top:397.41px;" width="8" height="8" viewBox="0 0 8 8"><path d="M4 0.6V5.2M4 5.2L0.8 7M4 5.2L7.2 7M1.4 6.6L4 2L6.6 6.6Z" stroke="#e57fa6" stroke-width="0.8" fill="none"/></svg>
<span class="t" style="left:55.70px;top:398px;font-size:7.1px;color:#adadad;">Datum Coordinate Syste...</span>
<svg class="a" style="left:158.4px;top:398.51px;" width="8.4" height="7.6" viewBox="0 0 8.4 7.6"><path d="M0.7 3.6L2.9 6.4L7.6 0.7" stroke="#42d33f" stroke-width="1.1" fill="none"/></svg>
<div class="a" style="left:19.4px;top:405.8px;width:151.00px;height:11.76px;background:#f9f9f9;border-top:1px solid #f1f1f1;box-sizing:border-box;"></div>
<div class="a" style="left:33.6px;top:412.78px;width:3.60px;height:0.80px;background:#c8c8c8;"></div>
<svg class="a" style="left:37.8px;top:409.78px;" width="8" height="7" viewBox="0 0 8 7"><path d="M0.3 3.4C2 0.6 6 0.6 7.7 3.4C6 6 2 6 0.3 3.4Z" fill="#fff" stroke="#5a5a5a" stroke-width="0.8"/><circle cx="4" cy="3.3" r="1.7" fill="#5a5a5a"/><path d="M0.6 6.2L7.6 0.2" stroke="#5a5a5a" stroke-width="0.9"/></svg>
<svg class="a" style="left:46.2px;top:409.18px;" width="8" height="8" viewBox="0 0 8 8"><path d="M0.6 2.2L3.4 0.6M0.6 2.2L2.6 2.6L2.2 5.4L4.2 6.6M2.6 2.6L6.8 1.4" stroke="#35b5d8" stroke-width="0.9" fill="none"/><path d="M3.4 7.6L4 5.6L6.8 3L7.8 4.2L5.2 7Z" fill="#e8b020" stroke="#5a4a28" stroke-width="0.5"/></svg>
<span class="t" style="left:55.70px;top:409px;font-size:7.1px;color:#adadad;letter-spacing:-0.173px;">Sketch (23) "SKETCH_011"</span>
<svg class="a" style="left:158.4px;top:410.28px;" width="8.4" height="7.6" viewBox="0 0 8.4 7.6"><path d="M0.7 3.6L2.9 6.4L7.6 0.7" stroke="#42d33f" stroke-width="1.1" fill="none"/></svg>
<div class="a" style="left:19.4px;top:417.56px;width:151.00px;height:11.77px;background:#fff;border-top:1px solid #f1f1f1;box-sizing:border-box;"></div>
<div class="a" style="left:33.6px;top:424.55px;width:3.60px;height:0.80px;background:#c8c8c8;"></div>
<svg class="a" style="left:37.8px;top:421.55px;" width="8" height="7" viewBox="0 0 8 7"><path d="M0.3 3.4C2 0.6 6 0.6 7.7 3.4C6 6 2 6 0.3 3.4Z" fill="#fff" stroke="#5a5a5a" stroke-width="0.8"/><circle cx="4" cy="3.3" r="1.7" fill="#5a5a5a"/><path d="M0.6 6.2L7.6 0.2" stroke="#5a5a5a" stroke-width="0.9"/></svg>
<svg class="a" style="left:46.2px;top:420.95px;" width="8" height="8" viewBox="0 0 8 8"><path d="M4 0.6V5.2M4 5.2L0.8 7M4 5.2L7.2 7M1.4 6.6L4 2L6.6 6.6Z" stroke="#e57fa6" stroke-width="0.8" fill="none"/></svg>
<span class="t" style="left:55.70px;top:421px;font-size:7.1px;color:#adadad;">Datum Coordinate Syste...</span>
<svg class="a" style="left:158.4px;top:422.05px;" width="8.4" height="7.6" viewBox="0 0 8.4 7.6"><path d="M0.7 3.6L2.9 6.4L7.6 0.7" stroke="#42d33f" stroke-width="1.1" fill="none"/></svg>
<div class="a" style="left:19.4px;top:429.33px;width:151.00px;height:11.77px;background:#f9f9f9;border-top:1px solid #f1f1f1;box-sizing:border-box;"></div>
<div class="a" style="left:33.6px;top:436.32px;width:3.60px;height:0.80px;background:#c8c8c8;"></div>
<svg class="a" style="left:37.8px;top:433.32px;" width="8" height="7" viewBox="0 0 8 7"><path d="M0.3 3.4C2 0.6 6 0.6 7.7 3.4C6 6 2 6 0.3 3.4Z" fill="#fff" stroke="#5a5a5a" stroke-width="0.8"/><circle cx="4" cy="3.3" r="1.7" fill="#5a5a5a"/><path d="M0.6 6.2L7.6 0.2" stroke="#5a5a5a" stroke-width="0.9"/></svg>
<svg class="a" style="left:46.2px;top:432.72px;" width="8" height="8" viewBox="0 0 8 8"><path d="M0.6 2.2L3.4 0.6M0.6 2.2L2.6 2.6L2.2 5.4L4.2 6.6M2.6 2.6L6.8 1.4" stroke="#35b5d8" stroke-width="0.9" fill="none"/><path d="M3.4 7.6L4 5.6L6.8 3L7.8 4.2L5.2 7Z" fill="#e8b020" stroke="#5a4a28" stroke-width="0.5"/></svg>
<span class="t" style="left:55.70px;top:433px;font-size:7.1px;color:#adadad;letter-spacing:-0.196px;">Sketch (25) "SKETCH_012"</span>
<svg class="a" style="left:158.4px;top:433.82px;" width="8.4" height="7.6" viewBox="0 0 8.4 7.6"><path d="M0.7 3.6L2.9 6.4L7.6 0.7" stroke="#42d33f" stroke-width="1.1" fill="none"/></svg>
<div class="a" style="left:19.4px;top:441.1px;width:151.00px;height:11.77px;background:#fff;border-top:1px solid #f1f1f1;box-sizing:border-box;"></div>
<div class="a" style="left:33.6px;top:448.09px;width:3.60px;height:0.80px;background:#c8c8c8;"></div>
<svg class="a" style="left:37.8px;top:445.09px;" width="8" height="7" viewBox="0 0 8 7"><path d="M0.3 3.4C2 0.6 6 0.6 7.7 3.4C6 6 2 6 0.3 3.4Z" fill="#fff" stroke="#5a5a5a" stroke-width="0.8"/><circle cx="4" cy="3.3" r="1.7" fill="#5a5a5a"/><path d="M0.6 6.2L7.6 0.2" stroke="#5a5a5a" stroke-width="0.9"/></svg>
<svg class="a" style="left:46.2px;top:444.49px;" width="8" height="8" viewBox="0 0 8 8"><path d="M1 6.4Q1.6 2 6.6 1L7.4 3.2Q4 4 3.2 7Z" fill="#fff" stroke="#2d7fc0" stroke-width="0.8"/></svg>
<span class="t" style="left:55.70px;top:445px;font-size:7.1px;color:#adadad;">Swept (26)</span>
<svg class="a" style="left:158.4px;top:445.59px;" width="8.4" height="7.6" viewBox="0 0 8.4 7.6"><path d="M0.7 3.6L2.9 6.4L7.6 0.7" stroke="#42d33f" stroke-width="1.1" fill="none"/></svg>
<div class="a" style="left:19.4px;top:452.88px;width:151.00px;height:11.76px;background:#f9f9f9;border-top:1px solid #f1f1f1;box-sizing:border-box;"></div>
<div class="a" style="left:33.6px;top:459.86px;width:3.60px;height:0.80px;background:#c8c8c8;"></div>
<svg class="a" style="left:37.8px;top:456.86px;" width="8" height="7" viewBox="0 0 8 7"><path d="M0.3 3.4C2 0.6 6 0.6 7.7 3.4C6 6 2 6 0.3 3.4Z" fill="#fff" stroke="#5a5a5a" stroke-width="0.8"/><circle cx="4" cy="3.3" r="1.7" fill="#5a5a5a"/><path d="M0.6 6.2L7.6 0.2" stroke="#5a5a5a" stroke-width="0.9"/></svg>
<svg class="a" style="left:46.2px;top:456.26px;" width="8" height="8" viewBox="0 0 8 8"><path d="M1 6.4Q1.6 2 6.6 1L7.4 3.2Q4 4 3.2 7Z" fill="#fff" stroke="#2d7fc0" stroke-width="0.8"/></svg>
<span class="t" style="left:55.70px;top:456px;font-size:7.1px;color:#adadad;">Swept (27)</span>
<svg class="a" style="left:158.4px;top:457.36px;" width="8.4" height="7.6" viewBox="0 0 8.4 7.6"><path d="M0.7 3.6L2.9 6.4L7.6 0.7" stroke="#42d33f" stroke-width="1.1" fill="none"/></svg>
<div class="a" style="left:19.4px;top:464.64px;width:151.00px;height:11.77px;background:#fff;border-top:1px solid #f1f1f1;box-sizing:border-box;"></div>
<div class="a" style="left:33.6px;top:471.63px;width:3.60px;height:0.80px;background:#c8c8c8;"></div>
<svg class="a" style="left:37.8px;top:468.63px;" width="8" height="7" viewBox="0 0 8 7"><path d="M0.3 3.4C2 0.6 6 0.6 7.7 3.4C6 6 2 6 0.3 3.4Z" fill="#fff" stroke="#5a5a5a" stroke-width="0.8"/><circle cx="4" cy="3.3" r="1.7" fill="#5a5a5a"/><path d="M0.6 6.2L7.6 0.2" stroke="#5a5a5a" stroke-width="0.9"/></svg>
<svg class="a" style="left:46.2px;top:468.03px;" width="8" height="8" viewBox="0 0 8 8"><path d="M1 6.4Q1.6 2 6.6 1L7.4 3.2Q4 4 3.2 7Z" fill="#fff" stroke="#2d7fc0" stroke-width="0.8"/></svg>
<span class="t" style="left:55.70px;top:468px;font-size:7.1px;color:#adadad;">Swept (28)</span>
<svg class="a" style="left:158.4px;top:469.13px;" width="8.4" height="7.6" viewBox="0 0 8.4 7.6"><path d="M0.7 3.6L2.9 6.4L7.6 0.7" stroke="#42d33f" stroke-width="1.1" fill="none"/></svg>
<div class="a" style="left:19.4px;top:476.41px;width:151.00px;height:11.77px;background:#f9f9f9;border-top:1px solid #f1f1f1;box-sizing:border-box;"></div>
<div class="a" style="left:33.6px;top:483.4px;width:3.60px;height:0.80px;background:#c8c8c8;"></div>
<svg class="a" style="left:37.8px;top:480.4px;" width="8" height="7" viewBox="0 0 8 7"><path d="M0.3 3.4C2 0.6 6 0.6 7.7 3.4C6 6 2 6 0.3 3.4Z" fill="#fff" stroke="#5a5a5a" stroke-width="0.8"/><circle cx="4" cy="3.3" r="1.7" fill="#5a5a5a"/><path d="M0.6 6.2L7.6 0.2" stroke="#5a5a5a" stroke-width="0.9"/></svg>
<svg class="a" style="left:46.2px;top:479.8px;" width="8" height="8" viewBox="0 0 8 8"><path d="M0.6 3L3.8 1L7 2.6V5.6L3.8 7.2L0.6 5.6Z" fill="#f08a1c" stroke="#8a4a10" stroke-width="0.5"/><path d="M3.6 3.6L7.4 7.4M7.4 3.6L3.6 7.4" stroke="#444" stroke-width="1"/></svg>
<span class="t" style="left:55.70px;top:480px;font-size:7.1px;color:#adadad;letter-spacing:-0.012px;">Delete Face (29)</span>
<svg class="a" style="left:158.4px;top:480.9px;" width="8.4" height="7.6" viewBox="0 0 8.4 7.6"><path d="M0.7 3.6L2.9 6.4L7.6 0.7" stroke="#42d33f" stroke-width="1.1" fill="none"/></svg>
<div class="a" style="left:19.4px;top:488.19px;width:151.00px;height:11.76px;background:#fff;border-top:1px solid #f1f1f1;box-sizing:border-box;"></div>
<div class="a" style="left:33.6px;top:495.17px;width:3.60px;height:0.80px;background:#c8c8c8;"></div>
<svg class="a" style="left:37.8px;top:492.17px;" width="8" height="7" viewBox="0 0 8 7"><path d="M0.3 3.4C2 0.6 6 0.6 7.7 3.4C6 6 2 6 0.3 3.4Z" fill="#fff" stroke="#5a5a5a" stroke-width="0.8"/><circle cx="4" cy="3.3" r="1.7" fill="#5a5a5a"/><path d="M0.6 6.2L7.6 0.2" stroke="#5a5a5a" stroke-width="0.9"/></svg>
<svg class="a" style="left:46.2px;top:491.57px;" width="8" height="8" viewBox="0 0 8 8"><path d="M0.6 3L3.8 1L7 2.6V5.6L3.8 7.2L0.6 5.6Z" fill="#f08a1c" stroke="#8a4a10" stroke-width="0.5"/><path d="M3.6 3.6L7.4 7.4M7.4 3.6L3.6 7.4" stroke="#444" stroke-width="1"/></svg>
<span class="t" style="left:55.70px;top:492px;font-size:7.1px;color:#adadad;letter-spacing:-0.012px;">Delete Face (30)</span>
<svg class="a" style="left:158.4px;top:492.67px;" width="8.4" height="7.6" viewBox="0 0 8.4 7.6"><path d="M0.7 3.6L2.9 6.4L7.6 0.7" stroke="#42d33f" stroke-width="1.1" fill="none"/></svg>
<div class="a" style="left:19.4px;top:499.95px;width:151.00px;height:11.77px;background:#f9f9f9;border-top:1px solid #f1f1f1;box-sizing:border-box;"></div>
<div class="a" style="left:33.6px;top:506.94px;width:3.60px;height:0.80px;background:#c8c8c8;"></div>
<svg class="a" style="left:37.8px;top:503.94px;" width="8" height="7" viewBox="0 0 8 7"><path d="M0.3 3.4C2 0.6 6 0.6 7.7 3.4C6 6 2 6 0.3 3.4Z" fill="#fff" stroke="#5a5a5a" stroke-width="0.8"/><circle cx="4" cy="3.3" r="1.7" fill="#5a5a5a"/><path d="M0.6 6.2L7.6 0.2" stroke="#5a5a5a" stroke-width="0.9"/></svg>
<svg class="a" style="left:46.2px;top:503.34px;" width="8" height="8" viewBox="0 0 8 8"><path d="M0.6 3L3.8 1L7 2.6V5.6L3.8 7.2L0.6 5.6Z" fill="#f08a1c" stroke="#8a4a10" stroke-width="0.5"/><path d="M3.6 3.6L7.4 7.4M7.4 3.6L3.6 7.4" stroke="#444" stroke-width="1"/></svg>
<span class="t" style="left:55.70px;top:504px;font-size:7.1px;color:#adadad;letter-spacing:-0.012px;">Delete Face (31)</span>
<svg class="a" style="left:158.4px;top:504.44px;" width="8.4" height="7.6" viewBox="0 0 8.4 7.6"><path d="M0.7 3.6L2.9 6.4L7.6 0.7" stroke="#42d33f" stroke-width="1.1" fill="none"/></svg>
<div class="a" style="left:19.4px;top:511.72px;width:151.00px;height:11.78px;background:#fff;border-top:1px solid #f1f1f1;box-sizing:border-box;"></div>
<div class="a" style="left:33.6px;top:518.71px;width:3.60px;height:0.80px;background:#c8c8c8;"></div>
<svg class="a" style="left:37.8px;top:515.71px;" width="8" height="7" viewBox="0 0 8 7"><path d="M0.3 3.4C2 0.6 6 0.6 7.7 3.4C6 6 2 6 0.3 3.4Z" fill="#fff" stroke="#5a5a5a" stroke-width="0.8"/><circle cx="4" cy="3.3" r="1.7" fill="#5a5a5a"/><path d="M0.6 6.2L7.6 0.2" stroke="#5a5a5a" stroke-width="0.9"/></svg>
<svg class="a" style="left:46.2px;top:515.11px;" width="8" height="8" viewBox="0 0 8 8"><path d="M0.6 2.4Q4 0.6 7.4 2.6L6.4 6.6Q4 5 1.6 6.4Z" fill="#fff" stroke="#f08a1c" stroke-width="0.9"/><path d="M3.6 3.4L7 6.8" stroke="#666" stroke-width="1.1"/></svg>
<span class="t" style="left:55.70px;top:515px;font-size:7.1px;color:#adadad;letter-spacing:-0.026px;">Trim Sheet (32)</span>
<svg class="a" style="left:158.4px;top:516.21px;" width="8.4" height="7.6" viewBox="0 0 8.4 7.6"><path d="M0.7 3.6L2.9 6.4L7.6 0.7" stroke="#42d33f" stroke-width="1.1" fill="none"/></svg>
<div class="a" style="left:19.4px;top:523.5px;width:151.00px;height:11.76px;background:#f9f9f9;border-top:1px solid #f1f1f1;box-sizing:border-box;"></div>
<div class="a" style="left:33.6px;top:530.48px;width:3.60px;height:0.80px;background:#c8c8c8;"></div>
<svg class="a" style="left:37.8px;top:527.48px;" width="8" height="7" viewBox="0 0 8 7"><path d="M0.3 3.4C2 0.6 6 0.6 7.7 3.4C6 6 2 6 0.3 3.4Z" fill="#fff" stroke="#5a5a5a" stroke-width="0.8"/><circle cx="4" cy="3.3" r="1.7" fill="#5a5a5a"/><path d="M0.6 6.2L7.6 0.2" stroke="#5a5a5a" stroke-width="0.9"/></svg>
<svg class="a" style="left:46.2px;top:526.88px;" width="8" height="8" viewBox="0 0 8 8"><path d="M0.6 2.4Q4 0.6 7.4 2.6L6.4 6.6Q4 5 1.6 6.4Z" fill="#fff" stroke="#f08a1c" stroke-width="0.9"/><path d="M3.6 3.4L7 6.8" stroke="#666" stroke-width="1.1"/></svg>
<span class="t" style="left:55.70px;top:527px;font-size:7.1px;color:#adadad;letter-spacing:-0.026px;">Trim Sheet (33)</span>
<svg class="a" style="left:158.4px;top:527.98px;" width="8.4" height="7.6" viewBox="0 0 8.4 7.6"><path d="M0.7 3.6L2.9 6.4L7.6 0.7" stroke="#42d33f" stroke-width="1.1" fill="none"/></svg>
<div class="a" style="left:19.4px;top:535.26px;width:151.00px;height:11.77px;background:#fff;border-top:1px solid #f1f1f1;box-sizing:border-box;"></div>
<div class="a" style="left:33.6px;top:542.25px;width:3.60px;height:0.80px;background:#c8c8c8;"></div>
<svg class="a" style="left:37.8px;top:539.25px;" width="8" height="7" viewBox="0 0 8 7"><path d="M0.3 3.4C2 0.6 6 0.6 7.7 3.4C6 6 2 6 0.3 3.4Z" fill="#fff" stroke="#5a5a5a" stroke-width="0.8"/><circle cx="4" cy="3.3" r="1.7" fill="#5a5a5a"/><path d="M0.6 6.2L7.6 0.2" stroke="#5a5a5a" stroke-width="0.9"/></svg>
<svg class="a" style="left:46.2px;top:538.65px;" width="8" height="8" viewBox="0 0 8 8"><path d="M0.6 2.4Q4 0.6 7.4 2.6L6.4 6.6Q4 5 1.6 6.4Z" fill="#fff" stroke="#f08a1c" stroke-width="0.9"/><path d="M3.6 3.4L7 6.8" stroke="#666" stroke-width="1.1"/></svg>
<span class="t" style="left:55.70px;top:539px;font-size:7.1px;color:#adadad;letter-spacing:-0.026px;">Trim Sheet (34)</span>
<svg class="a" style="left:158.4px;top:539.75px;" width="8.4" height="7.6" viewBox="0 0 8.4 7.6"><path d="M0.7 3.6L2.9 6.4L7.6 0.7" stroke="#42d33f" stroke-width="1.1" fill="none"/></svg>
<div class="a" style="left:19.4px;top:547.03px;width:151.00px;height:11.77px;background:#f9f9f9;border-top:1px solid #f1f1f1;box-sizing:border-box;"></div>
<div class="a" style="left:33.6px;top:554.02px;width:3.60px;height:0.80px;background:#c8c8c8;"></div>
<svg class="a" style="left:37.8px;top:551.02px;" width="8" height="7" viewBox="0 0 8 7"><path d="M0.3 3.4C2 0.6 6 0.6 7.7 3.4C6 6 2 6 0.3 3.4Z" fill="#fff" stroke="#5a5a5a" stroke-width="0.8"/><circle cx="4" cy="3.3" r="1.7" fill="#5a5a5a"/><path d="M0.6 6.2L7.6 0.2" stroke="#5a5a5a" stroke-width="0.9"/></svg>
<svg class="a" style="left:46.2px;top:550.42px;" width="8" height="8" viewBox="0 0 8 8"><path d="M0.6 2.4Q4 0.6 7.4 2.6L6.4 6.6Q4 5 1.6 6.4Z" fill="#fff" stroke="#f08a1c" stroke-width="0.9"/><path d="M3.6 3.4L7 6.8" stroke="#666" stroke-width="1.1"/></svg>
<span class="t" style="left:55.70px;top:551px;font-size:7.1px;color:#adadad;letter-spacing:-0.026px;">Trim Sheet (35)</span>
<svg class="a" style="left:158.4px;top:551.52px;" width="8.4" height="7.6" viewBox="0 0 8.4 7.6"><path d="M0.7 3.6L2.9 6.4L7.6 0.7" stroke="#42d33f" stroke-width="1.1" fill="none"/></svg>
<div class="a" style="left:19.4px;top:558.8px;width:151.00px;height:11.77px;background:#fff;border-top:1px solid #f1f1f1;box-sizing:border-box;"></div>
<div class="a" style="left:33.6px;top:565.79px;width:3.60px;height:0.80px;background:#c8c8c8;"></div>
<svg class="a" style="left:37.8px;top:562.79px;" width="8" height="7" viewBox="0 0 8 7"><path d="M0.3 3.4C2 0.6 6 0.6 7.7 3.4C6 6 2 6 0.3 3.4Z" fill="#fff" stroke="#3c3c3c" stroke-width="0.8"/><circle cx="4" cy="3.3" r="1.7" fill="#3c3c3c"/></svg>
<svg class="a" style="left:46.2px;top:562.19px;" width="8" height="8" viewBox="0 0 8 8"><path d="M0.6 2.2L3.4 0.6M0.6 2.2L2.6 2.6L2.2 5.4L4.2 6.6M2.6 2.6L6.8 1.4" stroke="#35b5d8" stroke-width="0.9" fill="none"/><path d="M3.4 7.6L4 5.6L6.8 3L7.8 4.2L5.2 7Z" fill="#e8b020" stroke="#5a4a28" stroke-width="0.5"/></svg>
<span class="t" style="left:55.70px;top:562px;font-size:7.1px;color:#1c1c1c;letter-spacing:-0.196px;">Sketch (36) "SKETCH_013"</span>
<svg class="a" style="left:158.4px;top:563.29px;" width="8.4" height="7.6" viewBox="0 0 8.4 7.6"><path d="M0.7 3.6L2.9 6.4L7.6 0.7" stroke="#42d33f" stroke-width="1.1" fill="none"/></svg>
<div class="a" style="left:19.4px;top:570.57px;width:151.00px;height:11.77px;background:#f9f9f9;border-top:1px solid #f1f1f1;box-sizing:border-box;"></div>
<div class="a" style="left:33.6px;top:577.56px;width:3.60px;height:0.80px;background:#c8c8c8;"></div>
<svg class="a" style="left:37.8px;top:574.56px;" width="8" height="7" viewBox="0 0 8 7"><path d="M0.3 3.4C2 0.6 6 0.6 7.7 3.4C6 6 2 6 0.3 3.4Z" fill="#fff" stroke="#5a5a5a" stroke-width="0.8"/><circle cx="4" cy="3.3" r="1.7" fill="#5a5a5a"/><path d="M0.6 6.2L7.6 0.2" stroke="#5a5a5a" stroke-width="0.9"/></svg>
<svg class="a" style="left:46.2px;top:573.96px;" width="8" height="8" viewBox="0 0 8 8"><path d="M0.3 4L2.6 2.2Q4 1.4 5.4 2.2L7.7 4L5.4 5.8Q4 6.6 2.6 5.8Z" fill="#f4bfd4" stroke="#e893b6" stroke-width="0.7"/></svg>
<span class="t" style="left:55.70px;top:574px;font-size:7.1px;color:#adadad;letter-spacing:0.044px;">Datum Plane (37)</span>
<svg class="a" style="left:158.4px;top:575.06px;" width="8.4" height="7.6" viewBox="0 0 8.4 7.6"><path d="M0.7 3.6L2.9 6.4L7.6 0.7" stroke="#42d33f" stroke-width="1.1" fill="none"/></svg>
<div class="a" style="left:19.4px;top:582.34px;width:151.00px;height:11.77px;background:#fff;border-top:1px solid #f1f1f1;box-sizing:border-box;"></div>
<div class="a" style="left:33.6px;top:589.33px;width:3.60px;height:0.80px;background:#c8c8c8;"></div>
<svg class="a" style="left:37.8px;top:586.33px;" width="8" height="7" viewBox="0 0 8 7"><path d="M0.3 3.4C2 0.6 6 0.6 7.7 3.4C6 6 2 6 0.3 3.4Z" fill="#fff" stroke="#5a5a5a" stroke-width="0.8"/><circle cx="4" cy="3.3" r="1.7" fill="#5a5a5a"/><path d="M0.6 6.2L7.6 0.2" stroke="#5a5a5a" stroke-width="0.9"/></svg>
<svg class="a" style="left:46.2px;top:585.73px;" width="8" height="8" viewBox="0 0 8 8"><path d="M0.6 2.2L3.4 0.6M0.6 2.2L2.6 2.6L2.2 5.4L4.2 6.6M2.6 2.6L6.8 1.4" stroke="#35b5d8" stroke-width="0.9" fill="none"/><path d="M3.4 7.6L4 5.6L6.8 3L7.8 4.2L5.2 7Z" fill="#e8b020" stroke="#5a4a28" stroke-width="0.5"/></svg>
<span class="t" style="left:55.70px;top:586px;font-size:7.1px;color:#adadad;letter-spacing:-0.196px;">Sketch (38) "SKETCH_014"</span>
<svg class="a" style="left:158.4px;top:586.83px;" width="8.4" height="7.6" viewBox="0 0 8.4 7.6"><path d="M0.7 3.6L2.9 6.4L7.6 0.7" stroke="#42d33f" stroke-width="1.1" fill="none"/></svg>
<div class="a" style="left:19.4px;top:594.11px;width:151.00px;height:4.69px;background:#f9f9f9;border-top:1px solid #f1f1f1;box-sizing:border-box;"></div>
<svg class="a" style="left:37.8px;top:595.71px;" width="8" height="1.8" viewBox="0 0 8 1.8"><path d="M0.6 6.2L7.6 0.2" stroke="#5a5a5a" stroke-width="0.9"/></svg>
<svg class="a" style="left:158.6px;top:595.71px;" width="8.4" height="1.8" viewBox="0 0 8.4 1.8"><path d="M0.6 4.8L2.8 7.8L7.6 0.8" stroke="#42d33f" stroke-width="1.1" fill="none"/></svg>
<div class="a" style="left:33.2px;top:136.4px;width:0.70px;height:462.20px;background:#dcdcdc;"></div>
<div class="a" style="left:141.2px;top:112.4px;width:0.80px;height:486.20px;background:#ececec;"></div>
<div class="a" style="left:156.4px;top:112.4px;width:0.80px;height:486.20px;background:#ececec;"></div>
<div class="a" style="left:170.2px;top:112.4px;width:0.70px;height:11.80px;background:#e2e2e2;"></div>
<div class="a" style="left:170.4px;top:124.4px;width:10.40px;height:474.40px;background:#f0f0f0;"></div>
<div class="a" style="left:171px;top:157px;width:8.80px;height:293.00px;background:#c6c6c6;"></div>
<svg class="a" style="left:172.6px;top:127.8px;" width="5.6" height="3.6" viewBox="0 0 10 6"><path d="M0.8 5.4L5 1L9.2 5.4" stroke="#555" stroke-width="1.6" fill="none"/></svg>
<svg class="a" style="left:172.6px;top:591.4px;" width="5.6" height="3.6" viewBox="0 0 10 6"><path d="M0.8 0.8L5 5.2L9.2 0.8" stroke="#555" stroke-width="1.6" fill="none"/></svg>
<div class="a" style="left:19.4px;top:598.8px;width:161.40px;height:10.60px;background:#f0f0f0;"></div>
<div class="a" style="left:30px;top:599.2px;width:71.00px;height:9.60px;background:#c6c6c6;"></div>
<svg class="a" style="left:22.6px;top:601.2px;" width="3.6" height="5.6" viewBox="0 0 6 10"><path d="M5.2 0.8L0.8 5L5.2 9.2" stroke="#555" stroke-width="1.6" fill="none"/></svg>
<svg class="a" style="left:162.8px;top:601.2px;" width="3.6" height="5.6" viewBox="0 0 6 10"><path d="M0.8 0.8L5.2 5L0.8 9.2" stroke="#555" stroke-width="1.6" fill="none"/></svg>
<div class="a" style="left:19px;top:610.2px;width:162.00px;height:2.00px;background:#bdbdbd;"></div>
<span class="t" style="left:32.60px;top:615px;font-size:8.3px;color:#1d6f93;letter-spacing:-0.178px;">Search</span>
<svg class="a" style="left:24.4px;top:616.8px;" width="2.6" height="4.6" viewBox="0 0 5 9"><path d="M0 0L5 4.5L0 9Z" fill="#1d6f93"/></svg>
<div class="a" style="left:19px;top:625px;width:162.00px;height:2.00px;background:#e3e3e3;"></div>
<span class="t" style="left:32.60px;top:628px;font-size:8.3px;color:#1d6f93;letter-spacing:0.047px;">Dependencies</span>
<svg class="a" style="left:24.4px;top:630.2px;" width="2.6" height="4.6" viewBox="0 0 5 9"><path d="M0 0L5 4.5L0 9Z" fill="#1d6f93"/></svg>
<div class="a" style="left:19px;top:638px;width:162.00px;height:2.00px;background:#e3e3e3;"></div>
<span class="t" style="left:32.60px;top:642px;font-size:8.3px;color:#1d6f93;">Details</span>
<svg class="a" style="left:24.4px;top:643.7px;" width="2.6" height="4.6" viewBox="0 0 5 9"><path d="M0 0L5 4.5L0 9Z" fill="#1d6f93"/></svg>
<div class="a" style="left:19px;top:652px;width:162.00px;height:2.00px;background:#e3e3e3;"></div>
<span class="t" style="left:32.60px;top:656px;font-size:8.3px;color:#1d6f93;letter-spacing:-0.041px;">Preview</span>
<svg class="a" style="left:24.4px;top:657.6px;" width="2.6" height="4.6" viewBox="0 0 5 9"><path d="M0 0L5 4.5L0 9Z" fill="#1d6f93"/></svg>
<div class="a" style="left:19px;top:666px;width:162.00px;height:2.00px;background:#e3e3e3;"></div>
<div class="a" style="left:0px;top:670px;width:1685.00px;height:1.00px;background:#cdcdcd;"></div>
<!-- view -->
<span class="t" style="left:199.60px;top:101px;font-size:7.1px;color:#333;letter-spacing:-0.037px;">Discovery Center</span>
<div class="a" style="left:263.9px;top:96.6px;width:64.50px;height:14.00px;background:#04668d;"></div>
<span class="t" style="left:277.20px;top:101px;font-size:7.1px;color:#eef5f8;letter-spacing:0.144px;">Hairdryer.prt</span>
<svg class="a" style="left:320.6px;top:101.4px;" width="4.6" height="4.6" viewBox="0 0 10 10"><path d="M0.8 0.8L9.2 9.2M9.2 0.8L0.8 9.2" stroke="#fff" stroke-width="2.2"/></svg>
<div class="a" style="left:186px;top:110.6px;width:1481.40px;height:1.10px;background:#04668d;"></div>
<div class="a" style="left:1667.2px;top:96.8px;width:0.70px;height:573.20px;background:#efefef;"></div>
<div class="a" style="left:1672px;top:260px;width:9.50px;height:0.60px;background:#dcdcdc;"></div>
<svg class="a" style="left:1671.6px;top:662.6px;" width="3.2" height="4.4" viewBox="0 0 6 10"><path d="M6 0L0 5L6 10Z" fill="#222"/></svg>
<svg class="a" style="left:200px;top:580px;" width="75" height="58" viewBox="0 0 75 58"><g fill="none" stroke="#b9b9b9" stroke-width="0.6"><path d="M23.3 28.1L38.3 19.4L53.4 28.1L38.3 35.8ZM23.3 28.1V44.3L38.3 52.8L53.4 44.3V28.1M38.3 35.8V52.8"/></g><path d="M39.6 27.6L39.6 14.2L41.0 14.2L38.3 6.2L35.6 14.2L37.1 14.2L37.1 27.6Z" fill="#0a2bbd"/><path d="M53.4 28.1L59.2 25.1L60.0 26.5L64.4 21.2L57.5 21.9L58.3 23.4L52.6 26.5Z" fill="#2f9e36"/><path d="M44.9 40.7L57.2 47.3L56.3 49.0L63.8 49.8L59.0 43.9L58.1 45.6L45.9 38.9Z" fill="#cf2c2c"/><text x="36.9" y="4.6" font-size="5.8" font-family="Liberation Sans,sans-serif" fill="#3f63f0" >Z</text><text x="65.4" y="20.8" font-size="5.8" font-family="Liberation Sans,sans-serif" fill="#3fae46" >Y</text><text x="65.6" y="53.8" font-size="5.8" font-family="Liberation Sans,sans-serif" fill="#e04646" >X</text></svg>
<!-- taskbar -->
<div class="a" style="left:0px;top:681.6px;width:1685.00px;height:24.40px;background:#1b1c1e;"></div>
<div class="a" style="left:0px;top:681px;width:1685.00px;height:1.00px;background:#6e6e6e;"></div>
<div class="a" style="left:29.2px;top:682.6px;width:176.60px;height:23.40px;background:#313131;"></div>
<svg class="a" style="left:9.8px;top:688.8px;" width="10.4" height="10.4" viewBox="0 0 10.4 10.4"><path d="M0 1.5L4.3 0.9V4.9H0ZM4.9 0.8L10.4 0V4.9H4.9ZM0 5.5H4.3V9.5L0 8.9ZM4.9 5.5H10.4V10.4L4.9 9.6Z" fill="#fff"/></svg>
<svg class="a" style="left:36px;top:688.4px;" width="11.4" height="11.4" viewBox="0 0 11.4 11.4"><circle cx="7.2" cy="4.2" r="3.3" fill="none" stroke="#e6e6e6" stroke-width="0.9"/><path d="M4.8 6.6L0.6 10.8" stroke="#e6e6e6" stroke-width="0.9"/></svg>
<span class="t" style="left:55.20px;top:689px;font-size:8.9px;color:#dedede;letter-spacing:0.008px;">Type here to search</span>
<svg class="a" style="left:150px;top:678px;" width="80" height="28" viewBox="0 0 80 28"><svg x="0" y="0" width="56.2" height="28" viewBox="0 0 1183.6 590" preserveAspectRatio="none"><defs><linearGradient id="ice" x1="0" y1="0" x2="1" y2="1"><stop offset="0" stop-color="#e6f0fb"/><stop offset=".5" stop-color="#a9c6e0"/><stop offset="1" stop-color="#d3e2f6"/></linearGradient><radialGradient id="fur" cx=".42" cy=".3" r=".8"><stop offset="0" stop-color="#f6eefa"/><stop offset=".6" stop-color="#ddd0ea"/><stop offset="1" stop-color="#a892c6"/></radialGradient><filter id="bb" x="-10%" y="-10%" width="120%" height="120%"><feGaussianBlur stdDeviation="7"/></filter></defs><g filter="url(#bb)"><path d="M250 590L290 515L420 430L600 390L880 335L1175 308V590Z" fill="url(#ice)"/><path d="M480 560C560 520 700 500 800 470L900 520L700 590H470Z" fill="#7ea4c8" opacity=".75"/><path d="M385 150C370 105 420 95 445 110C480 95 530 95 555 115C585 105 590 140 575 165C640 150 760 160 820 215C870 260 890 320 880 360C905 365 925 390 920 440C915 475 880 480 865 450L850 400C830 420 800 430 775 425L770 500C765 525 715 525 705 500L690 440C670 445 650 445 640 440L650 520C640 550 580 550 575 525L560 400L530 410L475 540C455 565 405 560 410 535L445 380C430 330 430 280 450 240C415 225 390 190 385 150Z" fill="url(#fur)"/><path d="M700 380C720 370 770 380 775 425L770 500C765 525 715 525 705 500ZM865 450C840 420 850 370 880 360C905 365 925 390 920 440C915 475 880 480 865 450Z" fill="#9c84be" opacity=".7"/></g><circle cx="455" cy="185" r="9" fill="#4a4458"/><circle cx="505" cy="180" r="9" fill="#4a4458"/><ellipse cx="478" cy="212" rx="13" ry="9" fill="#5a5266"/></svg></svg>
<svg class="a" style="left:215px;top:688.4px;" width="11.4" height="10.2" viewBox="0 0 11.4 10.2"><path d="M0.3 0.9H8M0.3 9.3H8M1.5 0.9V9.3M6.8 0.9V9.3" fill="none" stroke="#e4e4e4" stroke-width=".95"/><path d="M9.6 0.2V10" stroke="#d0d0d0" stroke-width=".8"/><circle cx="9.6" cy="4.6" r=".8" fill="#fff"/></svg>
<div class="a" style="left:419.2px;top:682.2px;width:30.20px;height:23.80px;background:#a3602c;"></div>
<div class="a" style="left:419.2px;top:704.6px;width:30.20px;height:1.40px;background:#f58220;"></div>
<div class="a" style="left:541.2px;top:682.2px;width:29.70px;height:23.80px;background:#4b4b4e;"></div>
<div class="a" style="left:239.4px;top:704.6px;width:24.80px;height:1.40px;background:#7fbcec;"></div>
<div class="a" style="left:270px;top:704.6px;width:25.00px;height:1.40px;background:#7fbcec;"></div>
<div class="a" style="left:541.2px;top:704.6px;width:29.70px;height:1.40px;background:#7fbcec;"></div>
<div class="a" style="left:664.4px;top:704.6px;width:25.60px;height:1.40px;background:#7fbcec;"></div>
<svg class="a" style="left:244.8px;top:687.2px;" width="14" height="12" viewBox="0 0 14 12"><path d="M0.4 1.6Q0.4 0.6 1.4 0.6H5L6.4 2H12.6Q13.6 2 13.6 3V10.4Q13.6 11.4 12.6 11.4H1.4Q0.4 11.4 0.4 10.4Z" fill="#e9a11b"/><path d="M0.4 3.6H13.6V10.4Q13.6 11.4 12.6 11.4H1.4Q0.4 11.4 0.4 10.4Z" fill="#ffd766"/><path d="M2.6 6.6H11.4V11.4H2.6Z" fill="#3c9ae4"/><path d="M4.6 8.6H9.4V11.4H4.6Z" fill="#ffd766"/></svg>
<svg class="a" style="left:274.4px;top:686.0px;" width="15.2" height="15.2" viewBox="0 0 15.2 15.2"><circle cx="7.6" cy="7.6" r="7.4" fill="#fbbc05"/><path d="M7.6 7.6L1.2 3.9A7.4 7.4 0 0 1 14 3.9Z" fill="#ea4335"/><path d="M7.6 7.6L1.2 3.9A7.4 7.4 0 0 0 7.6 15Z" fill="#34a853"/><path d="M7.6 7.6L14 3.9H7.6Z" fill="#ea4335"/><circle cx="7.6" cy="7.6" r="3.5" fill="#fff"/><circle cx="7.6" cy="7.6" r="2.7" fill="#4285f4"/></svg>
<svg class="a" style="left:304.5px;top:686.7px;" width="15" height="13.4" viewBox="0 0 15 13.4"><rect x="4.4" y="0.4" width="10" height="12.6" rx=".8" fill="#2b7cd3"/><rect x="4.4" y="0.4" width="10" height="4.2" fill="#41a5ee"/><rect x="4.4" y="8.8" width="10" height="4.2" fill="#103f91"/><rect x="0.4" y="3" width="7.4" height="7.4" rx=".6" fill="#185abd"/><text x="4.1" y="8.8" font-size="5.6" font-weight="bold" text-anchor="middle" fill="#fff" font-family="Liberation Sans,sans-serif">W</text></svg>
<svg class="a" style="left:334.9px;top:686.7px;" width="15" height="13.4" viewBox="0 0 15 13.4"><circle cx="9" cy="6.6" r="6.2" fill="#ed6c47"/><path d="M9 0.4A6.2 6.2 0 0 1 15.2 6.6H9Z" fill="#ff8f6b"/><path d="M2.8 6.6H15.2A6.2 6.2 0 0 1 2.8 6.6Z" fill="#d35230"/><rect x="0.4" y="3" width="7.4" height="7.4" rx=".6" fill="#c43e1c"/><text x="4.1" y="8.8" font-size="5.6" font-weight="bold" text-anchor="middle" fill="#fff" font-family="Liberation Sans,sans-serif">P</text></svg>
<svg class="a" style="left:365.1px;top:686.7px;" width="15" height="13.4" viewBox="0 0 15 13.4"><rect x="4.4" y="0.4" width="10" height="12.6" rx=".8" fill="#21a366"/><rect x="4.4" y="0.4" width="10" height="4.2" fill="#33c481"/><rect x="4.4" y="8.8" width="10" height="4.2" fill="#185c37"/><rect x="0.4" y="3" width="7.4" height="7.4" rx=".6" fill="#107c41"/><text x="4.1" y="8.8" font-size="5.6" font-weight="bold" text-anchor="middle" fill="#fff" font-family="Liberation Sans,sans-serif">X</text></svg>
<svg class="a" style="left:396.3px;top:686.6px;" width="15" height="14" viewBox="0 0 15 14"><path d="M0.4 7.6L5 5.6L7.4 7.8L4.6 10.6Z" fill="#3a8fd6"/><path d="M5 5.6L9.4 0.6C10.4 0.6 12.6 7 14.6 11.4C12.6 10 10.6 9.6 9.4 11L7.4 13.4L4.6 10.6L7.4 7.8Z" fill="#e8671c"/><path d="M9.4 0.6C10.4 0.6 12.6 7 14.6 11.4C12.6 10 10.6 9.6 9.4 11Z" fill="#b52a14"/><path d="M5 5.6L9.4 0.6L8.4 5.4L7.4 7.8Z" fill="#f8b84a"/></svg>
<svg class="a" style="left:426.2px;top:685.0px;" width="15.6" height="15.6" viewBox="0 0 15.6 15.6"><circle cx="7.4" cy="7.4" r="7.2" fill="#5865f2"/><path d="M3.6 5.4C5.6 4.2 9.2 4.2 11.2 5.4C12.2 7 12.6 8.6 12.4 10C11.4 10.8 10.4 11 10 10.6L9.4 9.8C8.2 10.2 6.6 10.2 5.4 9.8L4.8 10.6C4.4 11 3.4 10.8 2.4 10C2.2 8.6 2.6 7 3.6 5.4Z" fill="#fff"/><circle cx="11.4" cy="11.6" r="3.9" fill="#e8383d"/><text x="11.4" y="13.4" font-size="4.8" font-weight="bold" text-anchor="middle" fill="#fff" font-family="Liberation Sans,sans-serif">9+</text></svg>
<svg class="a" style="left:456.3px;top:686.3px;" width="14.6" height="14.6" viewBox="0 0 14.6 14.6"><circle cx="7.3" cy="7.3" r="7.1" fill="#1ed760"/><path d="M3 5.2C6 4.2 9.6 4.6 12 6M3.6 7.6C6 6.8 9 7.2 11 8.4M4.2 9.8C6 9.2 8.4 9.4 10 10.4" fill="none" stroke="#111" stroke-width="1.2" stroke-linecap="round"/></svg>
<svg class="a" style="left:487.0px;top:686.0px;" width="15.2" height="15.2" viewBox="0 0 15.2 15.2"><rect x="0" y="0" width="15.2" height="15.2" fill="#52b043"/><path d="M0 0H15.2V2.4H0Z" fill="#63c152"/><path d="M2.8 3.8H6.2V7.2H2.8ZM9 3.8H12.4V7.2H9ZM6.2 7.2H9V8.8H10.6V13.2H9V11.6H6.2V13.2H4.6V8.8H6.2Z" fill="#161616"/></svg>
<svg class="a" style="left:517.3px;top:686.3px;" width="15" height="15" viewBox="0 0 15 15"><defs><linearGradient id="st524" x1="0" y1="0" x2="0" y2="1"><stop offset="0" stop-color="#101f3f"/><stop offset="1" stop-color="#1a6aa8"/></linearGradient></defs><circle cx="7.5" cy="7.5" r="7.2" fill="url(#st524)"/><path d="M0.6 8.2L5.4 10.2L8.6 6.2" fill="none" stroke="#fff" stroke-width="2.2" stroke-linecap="round"/><circle cx="10.4" cy="5.2" r="2.5" fill="none" stroke="#fff" stroke-width="1.1"/><circle cx="5" cy="10.6" r="1.9" fill="#fff"/></svg>
<svg class="a" style="left:547.9px;top:685.9px;" width="15" height="14.6" viewBox="0 0 15 14.6"><path d="M0.6 2.6H2V13H11.6V14.2H0.6Z" fill="#16a5b8"/><rect x="2" y="0.4" width="12.6" height="12.6" fill="#a3161d"/><text x="8.3" y="9.2" font-size="6.4" font-weight="bold" text-anchor="middle" fill="#fff" font-family="Liberation Sans,sans-serif" letter-spacing="-.3">NX</text></svg>
<svg class="a" style="left:578.7px;top:686.3px;" width="14.6" height="14.6" viewBox="0 0 14.6 14.6"><defs><radialGradient id="gl" cx=".4" cy=".35" r=".7"><stop offset="0" stop-color="#fff"/><stop offset="1" stop-color="#9aa0a6"/></radialGradient></defs><circle cx="7.3" cy="7.3" r="7" fill="url(#gl)"/><path d="M1.4 9.6C1 6 3.6 2.6 7 1.8C9 3.4 6 5.4 4.6 7.2C3.6 8.6 3 10.4 1.4 9.6Z" fill="#4aa63a"/><path d="M7.6 6C9.6 5.2 12.4 6.6 13 9C12.6 11.6 10.4 13.6 7.8 14C6.6 12 8.4 10.6 7.6 9C7 8 6.8 6.6 7.6 6Z" fill="#2a7fd0"/><path d="M6 3.6L10.4 7.6L8.6 8L10 10.6" fill="none" stroke="#fff" stroke-width=".7"/></svg>
<svg class="a" style="left:608.5px;top:685.7px;" width="15" height="15.4" viewBox="0 0 15 15.4"><path d="M0.6 1.6Q0.6 0.4 1.8 0.4H10.4L14.4 4.4V13.8Q14.4 15 13.2 15H1.8Q0.6 15 0.6 13.8Z" fill="#fbbd08"/><path d="M4 4.4L10.6 7.8L4 11.2Z" fill="none" stroke="#fff" stroke-width="1.3" stroke-linejoin="round"/><text x="11.4" y="14" font-size="3.8" font-weight="bold" text-anchor="middle" fill="#7a5a00" font-family="Liberation Sans,sans-serif">JS</text></svg>
<svg class="a" style="left:639.5px;top:686.7px;" width="13.8" height="13.8" viewBox="0 0 13.8 13.8"><rect x=".2" y=".2" width="13.4" height="13.4" rx="2.6" fill="#1f9aa3"/><path d="M6.9 6.9C5.6 4.6 2.4 4.8 2.4 6.9C2.4 9 5.6 9.2 6.9 6.9C8.2 4.6 11.4 4.8 11.4 6.9C11.4 9 8.2 9.2 6.9 6.9Z" fill="none" stroke="#e8fbfc" stroke-width="1.1"/></svg>
<svg class="a" style="left:669.1px;top:686.3px;" width="15" height="15" viewBox="0 0 15 15"><defs><linearGradient id="st676" x1="0" y1="0" x2="0" y2="1"><stop offset="0" stop-color="#101f3f"/><stop offset="1" stop-color="#1a6aa8"/></linearGradient></defs><circle cx="7.5" cy="7.5" r="7.2" fill="url(#st676)"/><path d="M0.6 8.2L5.4 10.2L8.6 6.2" fill="none" stroke="#fff" stroke-width="2.2" stroke-linecap="round"/><circle cx="10.4" cy="5.2" r="2.5" fill="none" stroke="#fff" stroke-width="1.1"/><circle cx="5" cy="10.6" r="1.9" fill="#fff"/></svg>
<svg class="a" style="left:1440.4px;top:686.4px;" width="14" height="14" viewBox="0 0 14 14"><defs><linearGradient id="mn" x1="0" y1="0" x2="0" y2="1"><stop offset="0" stop-color="#ffc23a"/><stop offset="1" stop-color="#f0861a"/></linearGradient></defs><path d="M7.6 0.6C11 2 12.6 5 12.4 8C12 11.6 8.4 13.8 5 13.2C3 12.8 1.4 11.6 0.8 10.4C4 11 7.4 9.4 8.4 6.4C9 4.4 8.6 2.2 7.6 0.6Z" fill="url(#mn)"/></svg>
<span class="t" style="left:1459.39px;top:689px;font-size:8.4px;color:#f2f2f2;letter-spacing:-0.336px;">54°F</span>
<span class="t" style="left:1481.60px;top:689px;font-size:8.4px;color:#f2f2f2;letter-spacing:-0.169px;">Clear</span>
<svg class="a" style="left:1516.5px;top:690.9px;" width="9" height="5.4" viewBox="0 0 9 5.4"><path d="M0.6 4.8L4.5 0.8L8.4 4.8" fill="none" stroke="#f2f2f2" stroke-width=".9"/></svg>
<svg class="a" style="left:1532.2px;top:687.5px;" width="6" height="11" viewBox="0 0 6 11"><rect x="1.4" y="0.4" width="3.2" height="6.4" rx="1.4" fill="#f2f2f2"/><path d="M0.5 5.4C0.5 9 5.5 9 5.5 5.4M3 8.4V10M1.4 10.4H4.6" fill="none" stroke="#cfcfcf" stroke-width=".7"/></svg>
<svg class="a" style="left:1546.5px;top:688.0px;" width="7.4" height="10.4" viewBox="0 0 7.4 10.4"><ellipse cx="3.7" cy="5.2" rx="3.5" ry="5" fill="#1a86ec"/><path d="M2.2 3.6L5.2 6.6L3.7 8V2.4L5.2 3.8L2.2 6.8" fill="none" stroke="#fff" stroke-width=".7"/></svg>
<svg class="a" style="left:1559.3px;top:688.8px;" width="11" height="9.6" viewBox="0 0 11 9.6"><path d="M2.6 0.6H10.4V6.6H2.6ZM6.4 6.6V8.6M4.4 9H8.6" fill="none" stroke="#f2f2f2" stroke-width=".8"/><path d="M0.4 1.4H2.6M0.8 3H2.6" stroke="#f2f2f2" stroke-width=".7"/></svg>
<svg class="a" style="left:1573.8px;top:689.3px;" width="10.4" height="8.6" viewBox="0 0 10.4 8.6"><path d="M0.6 3H2.4L4.6 0.8V7.8L2.4 5.6H0.6Z" fill="none" stroke="#f2f2f2" stroke-width=".8"/><path d="M6 2.8C6.8 3.6 6.8 5 6 5.8M7.4 1.6C8.8 3 8.8 5.6 7.4 7M8.8 0.6C10.6 2.6 10.6 6 8.8 8" fill="none" stroke="#bdbdbd" stroke-width=".6"/></svg>
<span class="t" style="left:1593.30px;top:684px;font-size:7.2px;color:#f2f2f2;letter-spacing:-0.288px;">10:05 PM</span>
<span class="t" style="left:1590.40px;top:695px;font-size:7.2px;color:#f2f2f2;letter-spacing:0.145px;">2/27/2024</span>
<svg class="a" style="left:1634.9px;top:687.9px;" width="13" height="13" viewBox="0 0 13 13"><path d="M0.6 0.8H9.8V7.6H4L2 9.6V7.6H0.6Z" fill="#f2f2f2"/><path d="M2 2.6H8.4M2 4.2H8.4M2 5.8H6" stroke="#444" stroke-width=".5"/><circle cx="8.8" cy="8.8" r="3.4" fill="#1b1c1f" stroke="#f2f2f2" stroke-width=".7"/><text x="8.8" y="10.6" font-size="5" font-weight="bold" text-anchor="middle" fill="#f2f2f2" font-family="Liberation Sans,sans-serif">5</text></svg>
<svg class="a" style="left:1657.4px;top:686.6px;" width="14" height="13.6" viewBox="0 0 14 13.6"><defs><linearGradient id="cp" x1="0" y1="0" x2="1" y2="1"><stop offset="0" stop-color="#2a8ef0"/><stop offset=".45" stop-color="#9a5ae8"/><stop offset=".75" stop-color="#f0568a"/><stop offset="1" stop-color="#f8b42a"/></linearGradient></defs><path d="M3 2.4Q3.6 0.6 5.6 0.6H9Q11 0.6 11.4 2.6L13 8.6Q13.6 11 11.2 11.6L4.6 12.4Q2 12.6 1.4 10.2L0.6 6Q0.4 3.6 3 2.4Z" fill="url(#cp)"/><path d="M5 3H8.6L9.6 7.4L5.8 8Z" fill="#3ec8f0" opacity=".8"/><rect x="6.4" y="9" width="7" height="3.8" rx=".8" fill="#f2c12e"/><text x="9.9" y="12.1" font-size="3.2" font-weight="bold" text-anchor="middle" fill="#3a2a00" font-family="Liberation Sans,sans-serif">PRE</text></svg>
<div class="a" style="left:1682.2px;top:682px;width:0.60px;height:24.00px;background:#55585c;"></div>
<!-- icons -->
<svg class="a" width="0" height="0" style="left:0;top:0"><defs><linearGradient id="iO" x1="0" y1="0" x2="1" y2="1"><stop offset="0" stop-color="#fbb04e"/><stop offset="1" stop-color="#ee7a10"/></linearGradient><linearGradient id="iG" x1="0" y1="0" x2="1" y2="0"><stop offset="0" stop-color="#f6f6f6"/><stop offset="1" stop-color="#c4c4c4"/></linearGradient><linearGradient id="iD" x1="0" y1="0" x2="1" y2="0"><stop offset="0" stop-color="#b4b4b4"/><stop offset="1" stop-color="#8a8a8a"/></linearGradient><linearGradient id="iT" x1="0" y1="0" x2="0" y2="1"><stop offset="0" stop-color="#fafafa"/><stop offset="1" stop-color="#dcdcdc"/></linearGradient></defs></svg>
<svg class="a" style="left:8.5px;top:34.8px;" width="17" height="11" viewBox="0 0 17 11"><path d="M0.6 5.4L8.4 0.8L16.4 5.4L8.6 10.2Z" fill="#f6c9dc" stroke="#ea9bbb" stroke-width=".7"/></svg>
<svg class="a" style="left:33.5px;top:31.2px;" width="17" height="18" viewBox="0 0 17 18"><path d="M2.4 4.2C6 2 9 1 12.6 0.6M2.4 4.2L1 6.4M2.4 4.2L2.8 13.4H8.6" stroke="#3db8da" stroke-width=".8" fill="none"/><path d="M6.4 3.8L10 4.4L11.6 7.6L9.4 10.4L5.8 9.8L4.4 6.6Z" fill="#fff" stroke="#3db8da" stroke-width=".8"/><path d="M6.2 15.6L7 12.2L13.6 5.6L15.8 7.6L9.4 14.4Z" fill="#f2bc1e" stroke="#6b5a2a" stroke-width=".5"/><path d="M13.6 5.6L14.6 4.6L16.6 6.6L15.8 7.6Z" fill="#d8423a"/><path d="M6.2 15.6L7 12.2L9.4 14.4Z" fill="#3a3a3a"/></svg>
<svg class="a" style="left:66.3px;top:32.6px;" width="17" height="16" viewBox="0 0 17 16"><path d="M0.8 5L8 1L16 5V12L12 14.4V10L8.4 8.4L5.4 10V14.4L0.8 12Z" fill="url(#iG)" stroke="#8a8a8a" stroke-width=".5"/><path d="M0.8 5L8 1L16 5L12 7.4L8.2 5.4L5.2 7.4Z" fill="#f4f4f4" stroke="#52c2e2" stroke-width=".9" stroke-linejoin="round"/><path d="M12 7.4V14.4L16 12V5Z" fill="url(#iD)"/><path d="M5.2 7.4V14.4" stroke="#999" stroke-width=".5"/></svg>
<svg class="a" style="left:92.7px;top:32.1px;" width="17" height="17" viewBox="0 0 17 17"><path d="M2 8.4L11 3.6L15.8 6.4V11.6L9.6 16L2.6 12.6Z" fill="url(#iG)" stroke="#777" stroke-width=".5"/><path d="M9.6 16V11.4L15.8 6.4" stroke="#777" stroke-width=".5" fill="none"/><path d="M15.8 6.4V11.6L9.6 16V11.4Z" fill="url(#iD)"/><path d="M2 8.4L9.6 11.4M3.6 6.2L11.6 9.4M5.4 4.2L13.4 7.6" stroke="#777" stroke-width=".5"/><path d="M1.4 3.6L5.6 1L11 3.4M5.6 1L12.8 4.8L15.6 3.6M3.4 2.4L10 5.6L9.6 8.6" stroke="#52c2e2" stroke-width=".9" fill="none"/></svg>
<svg class="a" style="left:117.6px;top:32.4px;" width="16" height="16" viewBox="0 0 16 16"><path d="M1 5.2L8 1.6L15 5.2L8 8.8Z" fill="url(#iT)" stroke="#6e6e6e" stroke-width="0.5" stroke-linejoin="round"/><path d="M1 5.2L8 8.8V14.6L1 11Z" fill="url(#iG)" stroke="#6e6e6e" stroke-width="0.5" stroke-linejoin="round"/><path d="M15 5.2L8 8.8V14.6L15 11Z" fill="url(#iD)" stroke="#6e6e6e" stroke-width="0.5" stroke-linejoin="round"/><path d="M4.6 5.2V11.4C6 12.8 10 12.8 11.4 11.4V5.2Z" fill="#f4b467" opacity=".9"/><ellipse cx="8" cy="5.2" rx="3.4" ry="1.9" fill="url(#iO)"/></svg>
<svg class="a" style="left:137.4px;top:31.7px;" width="16" height="17" viewBox="0 0 16 17"><path d="M0.8 6.4C0.8 4 4 3 6 3.6C7 1 14.8 0.6 15.2 4.2V10.4C15 13 11 13.6 9.6 13C9 16 1 16.4 0.8 12.6Z" fill="url(#iG)" stroke="#7a7a7a" stroke-width=".5"/><path d="M10.6 7.6C13 7.6 15 6.4 15.2 4.2V10.4C15 12.6 12 13.4 10.6 13Z" fill="url(#iD)"/><path d="M0.8 6.4C1.4 9.6 9.4 9.8 10.6 7.6C13 7.6 15 6.4 15.2 4.2" stroke="#7a7a7a" stroke-width=".5" fill="none"/></svg>
<svg class="a" style="left:161.8px;top:31.7px;" width="16" height="17" viewBox="0 0 16 17"><path d="M1 6C1 3.4 5 2.6 6.4 3.2C7.6 0.8 14.8 0.6 15.2 4.2V10.6C14.8 12.8 12 13.4 10.8 13V6.4Z" fill="url(#iD)" stroke="#8a8a8a" stroke-width=".4"/><path d="M5 2.8C8 2 12 3 12.4 5.6C11.2 8 11 10.6 11.4 12.6C9 11.6 6 11.4 5 10.4Z" fill="url(#iO)"/><path d="M1 6C1.4 3.6 5 3 5 3V10.4C7 11 9.6 11.6 11.4 12.6C11 15.6 1.4 16 1 12.6Z" fill="#fff" stroke="#bdbdbd" stroke-width=".5"/></svg>
<svg class="a" style="left:189.5px;top:31.9px;" width="17" height="17" viewBox="0 0 17 17"><path d="M5 3.4L11.4 0.8L16.4 4.2V10.6L10.4 13.4L5 10Z" fill="url(#iG)" stroke="#7a7a7a" stroke-width=".5"/><path d="M10.4 7V13.4L16.4 10.6V4.2Z" fill="url(#iD)"/><path d="M5 3.4L10.4 7L16.4 4.2" stroke="#7a7a7a" stroke-width=".5" fill="none"/><path d="M0.8 5.4L5.4 3.4L9.6 6.6V13L5 15.8L0.8 12ZM0.8 5.4L5 8.8L9.6 6.6M5 8.8V15.8" stroke="#f08a24" stroke-width=".7" fill="none"/></svg>
<svg class="a" style="left:215.7px;top:32.4px;" width="17" height="16" viewBox="0 0 17 16"><path d="M1 8.6L9.8 13.2L16.2 9.6V12L9.8 15.4L1 10.8Z" fill="url(#iD)" stroke="#777" stroke-width=".4"/><path d="M9.4 1.4L16.2 5V9.6L9.8 13.2V8Z" fill="url(#iG)" stroke="#8a8a8a" stroke-width=".4"/><path d="M1 8.6C1 4 4 1.4 9.4 1.4L13 5.6C9 5.6 6.6 8 9.8 13.2Z" fill="url(#iO)"/><path d="M9.4 1.4L16.2 5L13 5.6Z" fill="#f4f4f4"/></svg>
<svg class="a" style="left:244.4px;top:32.4px;" width="16" height="16" viewBox="0 0 16 16"><path d="M1 5.4L8 1.4L11 3L5 7.4Z" fill="#f6f6f6" stroke="#888" stroke-width=".4"/><path d="M1 5.4L5 7.4L7.6 12.6V15L1 11.4Z" fill="url(#iG)" stroke="#888" stroke-width=".4"/><path d="M7.6 12.6L15 8.4V11L7.6 15Z" fill="url(#iD)" stroke="#777" stroke-width=".4"/><path d="M5 7.4L11 3L15 8.4L7.6 12.6Z" fill="url(#iO)"/></svg>
<svg class="a" style="left:270.0px;top:35.8px;" width="12.4" height="11.6" viewBox="0 0 12.4 11.6"><path d="M2 3.6L6.6 0.8L11.6 3L7.4 6Z" fill="#ededed" stroke="#8a8a8a" stroke-width=".4"/><path d="M7.4 6L11.6 3V7.6L6 10.8Z" fill="url(#iD)" stroke="#777" stroke-width=".4"/><path d="M2 3.6L7.4 6L6 10.8L0.6 8.2Z" fill="url(#iO)"/></svg>
<svg class="a" style="left:270.0px;top:53.8px;" width="12.4" height="12.4" viewBox="0 0 12.4 12.4"><path d="M0.8 3.6L6.2 0.8L11.6 3.6V8.8L6.2 11.6L0.8 8.8Z" fill="url(#iO)" stroke="#7a5a3a" stroke-width=".6"/><path d="M0.8 3.6L6.2 6.2L11.6 3.6M6.2 6.2V11.6" stroke="#c8650a" stroke-width=".5" fill="none"/><path d="M2.4 7.6L6 9.4L9.4 6.6L6.4 5.6Z" fill="#fbc063"/></svg>
<svg class="a" style="left:303.8px;top:35.0px;" width="12.4" height="13.2" viewBox="0 0 12.4 13.2"><path d="M2.6 1.8C2.6 0.4 7.6 0.4 7.6 1.8V5.6C7.6 7 2.6 7 2.6 5.6Z" fill="url(#iO)"/><path d="M0.6 6.8L3 5.8V7.4L5.4 8.4L0.8 8.6Z" fill="#bbb" stroke="#666" stroke-width=".4"/><path d="M4.8 6.4H11.8V12.6H4.8ZM8.3 6.4V12.6M4.8 9.5H11.8" fill="#fff" stroke="#555" stroke-width=".7"/></svg>
<svg class="a" style="left:303.8px;top:53.4px;" width="12.4" height="13.2" viewBox="0 0 12.4 13.2"><path d="M2.6 1.8C2.6 0.4 7.6 0.4 7.6 1.8V5.6C7.6 7 2.6 7 2.6 5.6Z" fill="url(#iO)"/><path d="M0.6 6.8L3 5.8V7.4L5.4 8.4L0.8 8.6Z" fill="#bbb" stroke="#666" stroke-width=".4"/><path d="M5.4 12.6L8.2 6.2L11.2 12.6ZM3.6 12.6H12.2" fill="#777" stroke="#444" stroke-width=".6"/><path d="M8.2 6.2V12.6" stroke="#eee" stroke-width=".5"/></svg>
<svg class="a" style="left:369.6px;top:31.7px;" width="18" height="17" viewBox="0 0 18 17"><path d="M0.8 9.6L9 5.6L17.2 9.6L9 14Z" fill="url(#iT)" stroke="#888" stroke-width=".4"/><path d="M0.8 9.6L9 14V16.2L0.8 11.8Z" fill="url(#iG)" stroke="#888" stroke-width=".4"/><path d="M17.2 9.6L9 14V16.2L17.2 11.8Z" fill="url(#iD)" stroke="#777" stroke-width=".4"/><path d="M5 2.4C5 0.4 13 0.4 13 2.4V9.4C13 11.4 5 11.4 5 9.4Z" fill="url(#iO)"/><ellipse cx="9" cy="2.4" rx="4" ry="1.5" fill="#f9a845"/></svg>
<svg class="a" style="left:395.9px;top:32.4px;" width="17" height="16" viewBox="0 0 17 16"><path d="M0.6 4.4L7 0.8L13.6 4.2L7.2 7.8Z" fill="url(#iO)"/><path d="M0.6 4.4L7.2 7.8V12.2L0.6 8.8Z" fill="url(#iG)" stroke="#8a8a8a" stroke-width=".4"/><path d="M13.6 4.2L7.2 7.8V12.2L13.6 8.6Z" fill="url(#iD)" stroke="#8a8a8a" stroke-width=".4"/><path d="M11 7.4L13 9.6H12V11H14V10L16.4 12L14 14V13H12V14.6H13L11 16.6L9 14.6H10V13H8V14L5.8 12L8 10V11H10V9.6H9Z" fill="#fff" stroke="#333" stroke-width=".5" transform="translate(0 -1.6)"/></svg>
<svg class="a" style="left:418.1px;top:32.4px;" width="17" height="16" viewBox="0 0 17 16"><path d="M0.6 4.4L7 0.8L13.6 4.2L7.2 7.8Z" fill="url(#iO)"/><path d="M0.6 4.4L7.2 7.8V12.2L0.6 8.8Z" fill="url(#iG)" stroke="#8a8a8a" stroke-width=".4"/><path d="M13.6 4.2L7.2 7.8V12.2L13.6 8.6Z" fill="url(#iD)" stroke="#8a8a8a" stroke-width=".4"/><path d="M8.6 8L15.6 14.6M15.6 8L8.6 14.6" stroke="#4a4a4a" stroke-width="1.7"/><path d="M8.6 8L15.6 14.6M15.6 8L8.6 14.6" stroke="#9a9a9a" stroke-width=".7"/></svg>
<svg class="a" style="left:443.1px;top:32.4px;" width="17" height="16" viewBox="0 0 17 16"><path d="M0.6 4.4L7 0.8L13.6 4.2L7.2 7.8Z" fill="url(#iO)"/><path d="M0.6 4.4L7.2 7.8V12.2L0.6 8.8Z" fill="url(#iG)" stroke="#8a8a8a" stroke-width=".4"/><path d="M13.6 4.2L7.2 7.8V12.2L13.6 8.6Z" fill="url(#iD)" stroke="#8a8a8a" stroke-width=".4"/><path d="M8.4 9.4H13V7.6L16.4 10.4L13 13.2V11.4H8.4Z" fill="#fff" stroke="#444" stroke-width=".5"/><path d="M6.6 12.2L9.6 11.8L8.6 15Z" fill="#bbb" stroke="#555" stroke-width=".4"/></svg>
<svg class="a" style="left:467.7px;top:35.3px;" width="12.6" height="12.6" viewBox="0 0 12.6 12.6"><path d="M0.6 3.6L5.6 0.8L11 3.6L6 6.4Z" fill="url(#iO)"/><path d="M0.6 3.6L6 6.4V10.4L0.6 7.6Z" fill="url(#iG)" stroke="#888" stroke-width=".4"/><path d="M11 3.6L6 6.4V10.4L11 7.6Z" fill="url(#iD)"/><path d="M7.6 5.4L12 4.6V10.6L7.6 11.8Z" fill="#fff" stroke="#444" stroke-width=".6"/></svg>
<svg class="a" style="left:467.7px;top:53.7px;" width="12.6" height="12.6" viewBox="0 0 12.6 12.6"><path d="M0.8 4.4C1.6 1.6 4 0.6 6.6 0.8L10.4 3.4V7.6L5.6 10.4L0.8 8Z" fill="url(#iG)" stroke="#777" stroke-width=".4"/><path d="M0.8 4.4C1.6 1.6 4 0.6 6.6 0.8L8 4C6 4 5.4 5.6 5.6 7.6L0.8 6.8Z" fill="url(#iO)"/><path d="M6.4 11.8L9.2 5.6L12.2 11.8Z" fill="#fff" stroke="#444" stroke-width=".6"/></svg>
<svg class="a" style="left:526.7px;top:32.7px;" width="15" height="15" viewBox="0 0 15 15"><path d="M2 6.6A5.6 5.6 0 0 1 12.4 4.6M13 8.4A5.6 5.6 0 0 1 2.6 10.4" stroke="#8e8e8e" stroke-width=".8" fill="none"/><path d="M12.6 1.4V4.8H9.2M2.4 13.6V10.2H5.8" stroke="#8e8e8e" stroke-width=".8" fill="none"/></svg>
<svg class="a" style="left:4.1px;top:99.5px;" width="7" height="7" viewBox="0 0 7 7"><circle cx="3.5" cy="3.5" r="2.1" fill="none" stroke="#444" stroke-width="1.1"/><path d="M3.5 0.2V1.4M3.5 5.6V6.8M0.2 3.5H1.4M5.6 3.5H6.8M1.2 1.2L2 2M5 5L5.8 5.8M5.8 1.2L5 2M2 5L1.2 5.8" stroke="#444" stroke-width=".9"/></svg>
<svg class="a" style="left:2.6px;top:120.7px;" width="12" height="12.6" viewBox="0 0 12 12.6"><path d="M1 5C1 3.6 4 3 6 4C7 2 11 2.2 11 4V8C11 9.4 8 10 6.6 9.4C6 11.6 1 11.6 1 9.4Z" fill="url(#iD)" stroke="#666" stroke-width=".6"/><path d="M1 5C2 6.6 6 6.6 6.6 5C8 5.4 11 5 11 4M6.6 5V9.4" fill="none" stroke="#777" stroke-width=".5"/></svg>
<svg class="a" style="left:2.5px;top:141.9px;" width="13" height="13" viewBox="0 0 13 13"><path d="M4 4.6L8.6 3L11 5.6V10.6L6.6 12.4L4 10Z" fill="url(#iG)" stroke="#666" stroke-width=".5"/><path d="M0.6 3.4L4 1.6L7.2 3.4V7.6L4 9.4L0.6 7.6Z" fill="url(#iO)"/><path d="M7 7L12.6 3.8V11.6Z" fill="#fff" stroke="#333" stroke-width=".6"/></svg>
<svg class="a" style="left:2.3px;top:163.2px;" width="13" height="12" viewBox="0 0 13 12"><path d="M0.8 7C1.4 4.4 3.4 4.4 4.4 1C6.6 1 7.6 3.2 7 5.6C9.6 5.4 12 6.8 12 8.6C10 11.4 3.6 11.6 1.2 9.8C0.6 9 0.6 8 0.8 7Z" fill="#b9b9b9" stroke="#6a6a6a" stroke-width=".6"/><path d="M3.6 7.6C5.6 8.8 9.4 8.8 11.8 8" fill="none" stroke="#6a6a6a" stroke-width=".6"/><path d="M4.4 1C5.4 3 5.4 5.4 3.6 7.6" fill="none" stroke="#8a8a8a" stroke-width=".5"/></svg>
<svg class="a" style="left:3.5px;top:183.1px;" width="11" height="13" viewBox="0 0 11 13"><path d="M1.4 2.4L5.6 0.8L9.6 2.4V10.4L5.6 12.2L1.4 10.4Z" fill="#e6e6e6" stroke="#555" stroke-width=".7"/><path d="M3.6 1.6V11.2M1.4 2.4L5.6 4L9.6 2.4" fill="none" stroke="#555" stroke-width=".6"/></svg>
<svg class="a" style="left:2.5px;top:203.9px;" width="13" height="13" viewBox="0 0 13 13"><path d="M1 8C1 5 4 3.6 6.6 3.6C9.6 3.6 12 5.4 12 8C12 10.6 9 12.2 6.4 12.2C3.4 12.2 1 10.6 1 8Z" fill="url(#iG)" stroke="#666" stroke-width=".6"/><path d="M2.6 7.4C5 9.6 9 9.2 11 6.6" fill="none" stroke="#666" stroke-width=".5"/><path d="M8 0.8L10.4 2.8L12.4 0.6M10.4 2.8V6" stroke="#f08a24" stroke-width=".9" fill="none"/></svg>
<svg class="a" style="left:2.5px;top:225.4px;" width="13" height="12" viewBox="0 0 13 12"><path d="M1 7C1 4.6 4 4 5 5C6 3.4 10 3 11.6 5.6C12.8 8 11 10.6 8 10.6H3.6C2 10.6 1 9 1 7Z" fill="#f4f4f4" stroke="#666" stroke-width=".6"/><path d="M0.6 2.6L3.6 1L6 2.6V5.4L3.6 6.8L0.6 5.4Z" fill="url(#iO)"/><ellipse cx="8.4" cy="8" rx="2.6" ry="1.8" fill="#fff" stroke="#666" stroke-width=".5"/></svg>
<svg class="a" style="left:2.0px;top:252.0px;" width="12" height="12" viewBox="0 0 12 12"><circle cx="5.2" cy="6.6" r="4.4" fill="#a8a8a8" stroke="#666" stroke-width=".6"/><path d="M5.2 2.2V11M3.4 4.6H7" stroke="#e8e8e8" stroke-width=".7"/><path d="M7.6 2.6C9.4 1.2 11 2.4 11 4" fill="none" stroke="#999" stroke-width=".6"/></svg>
<svg class="a" style="left:2.6px;top:276.8px;" width="12.4" height="12.4" viewBox="0 0 12.4 12.4"><rect x=".4" y=".4" width="11.6" height="11.6" fill="#c2c2c2" stroke="#7a7a7a" stroke-width=".6"/><circle cx="6.2" cy="6.4" r="4.1" fill="#2f8fc4"/><path d="M3.4 5C5 3.6 6.6 4.6 6 6.2C5.6 7.4 7.6 7.6 8.6 6.2" fill="none" stroke="#9ad4ee" stroke-width=".9"/></svg>
<svg class="a" style="left:2.3px;top:303.3px;" width="12.6" height="12.6" viewBox="0 0 12.6 12.6"><circle cx="6.3" cy="6.3" r="5.6" fill="#e6e6e6" stroke="#555" stroke-width=".7"/><path d="M6.3 2.4V6.6H3.4" fill="none" stroke="#555" stroke-width=".7"/></svg>
<svg class="a" style="left:2.7px;top:324.6px;" width="11" height="12" viewBox="0 0 11 12"><defs><linearGradient id="iR" x1="0" y1="0" x2="0" y2="1"><stop offset="0" stop-color="#e8221c"/><stop offset=".3" stop-color="#f2d31c"/><stop offset=".6" stop-color="#2ec43a"/><stop offset="1" stop-color="#1f4fd8"/></linearGradient></defs><rect x="1" y=".6" width="4" height="10.8" fill="url(#iR)"/><path d="M5.6 3.6L9.8 10.2L7.4 10.6Z" fill="#333"/></svg>
<svg class="a" style="left:2.6px;top:345.2px;" width="12" height="12" viewBox="0 0 12 12"><path d="M1.6 1V10.6M1 10.6H5" stroke="#2f6fd0" stroke-width="1.6"/><path d="M4.4 3.4L10.8 2.6L7.6 6.6L9.6 10.6L5.6 7.6Z" fill="#333"/><path d="M6 2L11 2.4L8 5.6Z" fill="#4a9be0"/></svg>
<svg class="a" style="left:2.6px;top:365.8px;" width="12.4" height="12.4" viewBox="0 0 12.4 12.4"><rect x=".5" y=".5" width="11.4" height="11.4" fill="#ececec" stroke="#666" stroke-width=".7"/><path d="M2.4 2.4L10 10M10 2.4L2.4 10M6.2 1V11.4M1 6.2H11.4" stroke="#555" stroke-width=".8"/><rect x="4.2" y="4.2" width="4" height="4" fill="#9a9a9a"/></svg>
<svg class="a" style="left:1670.5px;top:102.7px;" width="11" height="11" viewBox="0 0 11 11"><path d="M0.8 8.2L8.2 0.8L10.2 2.8L2.8 10.2Z" fill="#fff" stroke="#555" stroke-width=".7"/><path d="M3 6L4 7M4.6 4.4L5.6 5.4M6.2 2.8L7.2 3.8" stroke="#555" stroke-width=".5"/></svg>
<svg class="a" style="left:1670.0px;top:118.5px;" width="12" height="11" viewBox="0 0 12 11"><path d="M0.8 6.4C1.4 4 3.2 4 4 1C6 1 7 3 6.6 5.2C9 5 11.2 6.2 11.2 8C9.4 10.4 3.4 10.6 1.2 9C0.6 8.2 0.6 7.2 0.8 6.4Z" fill="#b4b4b4" stroke="#707070" stroke-width=".6"/><path d="M3.4 7C5.2 8.2 8.8 8.2 11 7.4" fill="none" stroke="#707070" stroke-width=".5"/></svg>
<svg class="a" style="left:1670.0px;top:134.0px;" width="12" height="12" viewBox="0 0 12 12"><path d="M1.6 3C4 1.4 6 1 8.6 0.8M1.6 3L0.8 4.6M1.6 3L2 9.4H5.4" fill="none" stroke="#3db8da" stroke-width=".8"/><path d="M4.4 3.4L8 3.6L9.6 6L8 8.4L4.6 8L3.4 5.6Z" fill="#fff" stroke="#3db8da" stroke-width=".8"/><path d="M5.4 9.6C5.4 7.6 8 7.6 8.6 8.6L11 6.4L11.6 8L9.6 10C9 11.4 5.6 11.6 5.4 9.6Z" fill="#fff" stroke="#555" stroke-width=".6"/></svg>
<svg class="a" style="left:1670.5px;top:150.3px;" width="11" height="11" viewBox="0 0 11 11"><path d="M0.6 10.4L10.4 0.6" stroke="#4fc0e0" stroke-width=".9"/></svg>
<svg class="a" style="left:1670.0px;top:165.2px;" width="12" height="12" viewBox="0 0 12 12"><path d="M0.8 7.4L6 5L11.2 7.4L6 10Z" fill="url(#iT)" stroke="#777" stroke-width=".4"/><path d="M0.8 7.4L6 10V11.6L0.8 9Z" fill="url(#iG)" stroke="#777" stroke-width=".4"/><path d="M11.2 7.4L6 10V11.6L11.2 9Z" fill="url(#iD)" stroke="#666" stroke-width=".4"/><path d="M3.4 2C3.4 0.4 8.6 0.4 8.6 2V7C8.6 8.6 3.4 8.6 3.4 7Z" fill="url(#iO)"/></svg>
<svg class="a" style="left:1670.0px;top:181.3px;" width="12" height="11.4" viewBox="0 0 12 11.4"><path d="M0.6 3.6L6 0.8L11.4 3.6V8.6L8.6 10.2V7L6 5.8L3.8 7V10.2L0.6 8.6Z" fill="url(#iG)" stroke="#888" stroke-width=".4"/><path d="M0.6 3.6L6 0.8L11.4 3.6L8.6 5.2L6 3.8L3.8 5.2Z" fill="#eef8fb" stroke="#52c2e2" stroke-width=".8"/><path d="M8.6 5.2V10.2L11.4 8.6V3.6Z" fill="url(#iD)"/></svg>
<svg class="a" style="left:1670.0px;top:197.0px;" width="12" height="12" viewBox="0 0 12 12"><circle cx="6" cy="6" r="5.1" fill="#fff" stroke="#3db8da" stroke-width=".9"/></svg>
<svg class="a" style="left:1670.0px;top:212.9px;" width="12" height="11" viewBox="0 0 12 11"><path d="M0.8 2C4 0.4 8 1 11.2 4L9 10C7 7 4 5.6 1.6 6Z" fill="#fde2c4" stroke="#f08a24" stroke-width=".9"/><path d="M0.6 1.4C4 0 8.4 0.6 11.4 3.2" fill="none" stroke="#555" stroke-width=".6"/></svg>
<svg class="a" style="left:1670.0px;top:228.0px;" width="12" height="12" viewBox="0 0 12 12"><path d="M3 5L7.6 3.4L11.2 5.6V9.8L7 11.6L3 9.6Z" fill="url(#iG)" stroke="#666" stroke-width=".5"/><path d="M0.6 2.6L4 0.8L7.4 2.6V6.6L4 8.4L0.6 6.6Z" fill="url(#iO)"/><path d="M6.6 8.6H11.4M9 7V10.4" stroke="#333" stroke-width=".8"/></svg>
<svg class="a" style="left:1670.0px;top:243.9px;" width="12" height="11" viewBox="0 0 12 11"><path d="M0.8 6.4L6.4 9.6L11.2 7V8.6L6.4 10.6L0.8 8Z" fill="url(#iD)" stroke="#666" stroke-width=".4"/><path d="M6 1L11.2 3.6V7L6.4 9.6V5.6Z" fill="url(#iG)" stroke="#777" stroke-width=".4"/><path d="M0.8 6.4C0.8 3 3 1 6 1L8.6 4C6 4 4.6 5.6 6.4 9.6Z" fill="url(#iO)"/></svg>
<svg class="a" style="left:136.7px;top:84.3px;" width="9" height="9" viewBox="0 0 9 9"><path d="M1 1.6H5.6L4 4V6.6L2.6 5.8V4ZM5.4 5.4L8.4 8.2M5.6 7.6L8.2 5.6" fill="none" stroke="#c9c9c9" stroke-width=".7"/></svg>
<svg class="a" style="left:242.3px;top:84.0px;" width="9" height="9.6" viewBox="0 0 9 9.6"><path d="M1.6 3.4C1.6 2 6.6 2 6.6 3.4V7.6C6.6 9 1.6 9 1.6 7.6Z" fill="url(#iO)" stroke="#a85a14" stroke-width=".4"/><path d="M3.6 2.6L5.6 0.8L8 2V4.6L6.6 5.6" fill="#ddd" stroke="#888" stroke-width=".5"/></svg>
<svg class="a" style="left:254.7px;top:84.0px;" width="9" height="9.6" viewBox="0 0 9 9.6"><path d="M1 2.6L3.6 1L5 3L3 4.6ZM4 4.6L7.6 3.6L8 6.6L5.4 8.6Z" fill="#e4e4e4" stroke="#c4c4c4" stroke-width=".6"/></svg>
<svg class="a" style="left:266.3px;top:83.8px;" width="9.4" height="10" viewBox="0 0 9.4 10"><path d="M1 2C1 0.6 5.6 0.6 5.6 2V4C5.6 5.4 1 5.4 1 4Z" fill="#d8d8d8" stroke="#666" stroke-width=".6"/><path d="M3.4 4.6H8.4V9.4H3.4ZM3.4 7H8.4" fill="#eee" stroke="#555" stroke-width=".7"/></svg>
<svg class="a" style="left:284.8px;top:84.0px;" width="9.6" height="9.6" viewBox="0 0 9.6 9.6"><path d="M2 1H0.8V7H2M5 1H6.2V4M2.6 3.4L4.6 5.4M4.6 3.4L2.6 5.4M6 6L9 8.8M6.4 8.6L8.8 6.2" fill="none" stroke="#c6c6c6" stroke-width=".7"/></svg>
<svg class="a" style="left:297.0px;top:84.0px;" width="10" height="9.6" viewBox="0 0 10 9.6"><path d="M0.8 3L4.4 1L8 3V6L4.4 8L0.8 6Z" fill="#fff" stroke="#f08a24" stroke-width=".8"/><path d="M0.8 3L4.4 5L8 3M4.4 5V8" fill="none" stroke="#f08a24" stroke-width=".6"/><path d="M7.4 5.6L9.4 7.6L7.4 9.4L5.6 7.6Z" fill="#555"/></svg>
<svg class="a" style="left:308.8px;top:83.8px;" width="10" height="10" viewBox="0 0 10 10"><rect x=".6" y=".6" width="5.8" height="5.8" fill="#fff" stroke="#f08a24" stroke-width=".9"/><path d="M7.2 4.6L9.4 7L7.2 9.4L5 7Z" fill="#444"/></svg>
<svg class="a" style="left:330.8px;top:84.0px;" width="9.6" height="9.6" viewBox="0 0 9.6 9.6"><path d="M0.8 4.6L4.8 1.6L8.8 4.6V6.6L4.8 8.8L0.8 6.6Z" fill="#e8e8e8" stroke="#a8a8a8" stroke-width=".6"/><path d="M0.8 4.6L4.8 6.6L8.8 4.6" fill="none" stroke="#a8a8a8" stroke-width=".5"/><path d="M4.6 4.2L7.6 5.6" stroke="#f08a24" stroke-width=".9"/></svg>
<svg class="a" style="left:342.6px;top:84.0px;" width="9.6" height="9.6" viewBox="0 0 9.6 9.6"><path d="M1 2.6L4.6 1L8.4 2.6V7L4.6 8.8L1 7Z" fill="#dcdcdc" stroke="#a0a0a0" stroke-width=".6"/><path d="M4.4 1.6V8.4" stroke="#f2a458" stroke-width="1.4"/><path d="M6 2.4V7.8" stroke="#c8c8c8" stroke-width=".8"/></svg>
<svg class="a" style="left:189.2px;top:98.9px;" width="8" height="9.4" viewBox="0 0 8 9.4"><path d="M0.6 1H7.4V5C7.4 7 5.6 8.4 4 8.8C2.4 8.4 0.6 7 0.6 5Z" fill="#fff" stroke="#555" stroke-width=".7"/><path d="M2.6 2.4V6.6M4 1V8.6M2.6 4.4H5.6V2.6" fill="none" stroke="#555" stroke-width=".6"/></svg>
<svg class="a" style="left:266.8px;top:100.1px;" width="7.6" height="7" viewBox="0 0 7.6 7"><path d="M0.8 4C1.2 2.6 2.4 2.6 2.8 0.8C4.2 0.8 4.8 2.2 4.4 3.4C6 3.4 7 4.2 7 5.2C5.8 6.6 2.4 6.6 1 5.6C0.6 5.2 0.6 4.6 0.8 4Z" fill="#d0cbc6" stroke="#8a8480" stroke-width=".5"/><path d="M2.4 4.4C3.6 5.2 5.6 5.2 6.8 4.8" fill="none" stroke="#8a8480" stroke-width=".4"/></svg>
<!-- dryer -->
<svg class="a" style="left:690px;top:180px" width="420" height="340" viewBox="690 180 420 340"><defs><linearGradient id="dB" gradientUnits="userSpaceOnUse" x1="842" y1="288" x2="905" y2="418"><stop offset="0" stop-color="#ff0000"/><stop offset=".22" stop-color="#ff0505"/><stop offset=".42" stop-color="#ff3a3a"/><stop offset=".60" stop-color="#ff0606"/><stop offset=".78" stop-color="#d80000"/><stop offset=".93" stop-color="#8e0000"/><stop offset="1" stop-color="#6a0000"/></linearGradient><linearGradient id="dR" gradientUnits="userSpaceOnUse" x1="960" y1="215" x2="1040" y2="380"><stop offset="0" stop-color="#ff0000"/><stop offset=".3" stop-color="#ff0303"/><stop offset=".52" stop-color="#ff2b2b"/><stop offset=".74" stop-color="#ff0505"/><stop offset="1" stop-color="#e80000"/></linearGradient><linearGradient id="dM" gradientUnits="userSpaceOnUse" x1="880" y1="0" x2="960" y2="0"><stop offset="0" stop-color="#fff" stop-opacity="0"/><stop offset="1" stop-color="#fff"/></linearGradient><mask id="dMk" maskUnits="userSpaceOnUse" x="690" y="180" width="420" height="340"><rect x="690" y="180" width="420" height="340" fill="url(#dM)"/></mask><linearGradient id="dBl" gradientUnits="userSpaceOnUse" x1="860" y1="265" x2="872" y2="296"><stop offset="0" stop-color="#0000c4"/><stop offset=".3" stop-color="#0000f6"/><stop offset="1" stop-color="#0000ff"/></linearGradient><linearGradient id="dN" gradientUnits="userSpaceOnUse" x1="715" y1="400" x2="770" y2="465"><stop offset="0" stop-color="#0000d6"/><stop offset=".5" stop-color="#0000ff"/><stop offset="1" stop-color="#0000f0"/></linearGradient><linearGradient id="dH" gradientUnits="userSpaceOnUse" x1="1000" y1="0" x2="1046" y2="0"><stop offset="0" stop-color="#d60000"/><stop offset=".9" stop-color="#d40000"/><stop offset="1" stop-color="#f01010"/></linearGradient><radialGradient id="dG" cx=".4" cy=".62" r=".7"><stop offset="0" stop-color="#ff1c1c"/><stop offset=".55" stop-color="#f40000"/><stop offset=".85" stop-color="#d80000"/><stop offset="1" stop-color="#a00000"/></radialGradient><linearGradient id="dV" x1="0" y1="0" x2="1" y2="0"><stop offset="0" stop-color="#f00808"/><stop offset=".45" stop-color="#ff2a2a"/><stop offset=".8" stop-color="#e40000"/><stop offset=".92" stop-color="#b00000"/><stop offset="1" stop-color="#860000"/></linearGradient></defs><path d="M1000 330L1047.4 343L1042.7 380L1030.4 475.4Q1030 479 1027.4 480.4L998.4 497.8Q992 501.4 986 498.6L973.4 490.6L972 400Z" fill="url(#dH)"/><path d="M986.0 384.0C980.7 386.3 974.7 388.2 966.0 392.6C957.3 397.0 956.7 396.7 953.4 400.4C950.1 404.1 953.2 403.7 953.6 406.5C954.0 409.3 953.4 408.6 955.0 411.0C956.6 413.4 956.9 413.5 959.5 415.4C962.1 417.3 964.1 415.7 964.6 418.0C965.1 420.3 963.2 420.2 961.2 424.2C959.2 428.2 958.4 429.3 957.2 433.1C956.0 436.9 956.2 435.3 956.8 438.4C957.4 441.5 957.0 441.5 959.5 444.6C962.0 447.7 965.4 446.8 966.3 449.9C967.2 453.0 964.7 452.6 963.0 456.1C961.3 459.6 960.7 459.9 959.8 463.2C958.9 466.5 959.3 464.7 959.5 468.5C959.7 472.3 959.5 473.1 960.4 477.3C961.3 481.5 959.4 480.7 963.0 484.4C966.6 488.1 971.1 489.4 974.0 491.2L986 486L986 392Z" fill="#0000f4" stroke="#1a1a8a" stroke-width="0.5"/><path d="M956 408.6L972 416.4M958.6 412.4L971.6 418.4M958.4 439.6L972.6 448.4M961 444L972.4 451M961 471L973.4 479.6M962.4 478.6L973.4 486" stroke="#10108c" stroke-width="0.45" fill="none"/><path d="M982.5 391.5L971.6 410L971.2 418.6Q982.6 428.1 998 426.6C1011.6 423.6 1015.1 409.6 1013.6 399.6C1013.0 392.6 1005.6 389.5 996.5 390.5Z" fill="url(#dG)" stroke="#8a1414" stroke-width="0.5"/><path d="M971.6 410Q992.6 416.0 1010.6 393.6M991.5 392.5Q987.5 410.0 992.5 421.6" stroke="#8a1414" stroke-width="0.45" fill="none"/><path d="M981.6 424L972.6 442L972 451Q982.0 460.1 996 458.6C1009.0 455.6 1012.5 444.6 1011 434.6C1010.4 427.6 1003.0 422.0 995.6 423.0Z" fill="url(#dG)" stroke="#8a1414" stroke-width="0.5"/><path d="M972.6 442Q991.8 448.0 1008.0 428.6M990.6 425.0Q986.6 442.0 991.6 454.0" stroke="#8a1414" stroke-width="0.45" fill="none"/><path d="M981.6 456L973.4 474L973.4 490.8Q981.7 491.5 994 490C1006.8 487.0 1010.3 476.6 1008.8 466.6C1008.2 459.6 1000.8 454.0 995.6 455.0Z" fill="url(#dG)" stroke="#8a1414" stroke-width="0.5"/><path d="M973.4 474Q991.1 480.0 1005.8 460.6M990.6 457.0Q986.6 474.0 991.6 493.8" stroke="#8a1414" stroke-width="0.45" fill="none"/><clipPath id="dC"><path d="M714.9 389.9C715.2 389.5 714.8 389.9 717.0 387.8C719.2 385.8 724.0 381.4 728.3 377.6C732.5 373.8 737.8 369.2 742.5 365.2C747.2 361.2 751.9 357.5 756.6 353.5C761.3 349.5 766.1 345.2 770.8 341.4C775.5 337.6 780.3 334.3 785.0 330.6C789.7 326.9 794.4 323.0 799.1 319.2C803.8 315.4 809.0 311.4 813.3 308.0C817.5 304.6 821.2 301.6 824.6 299.0C828.0 296.4 830.1 295.0 833.4 292.2C836.7 289.4 839.4 286.7 844.6 282.4C849.8 278.1 858.0 271.6 864.6 266.2C871.2 260.8 878.6 254.4 884.5 250.0C890.4 245.6 894.9 242.7 900.0 239.6C905.1 236.5 908.2 234.9 914.9 231.6C921.5 228.3 931.6 223.3 939.9 219.9C948.2 216.5 956.5 213.6 964.8 211.2C973.1 208.8 981.5 207.1 989.8 205.5C998.1 203.9 1008.9 202.3 1014.7 201.7C1020.5 201.1 1020.6 200.9 1024.7 202.0C1028.8 203.1 1037.1 207.0 1039.6 208.0C1041.7 209.6 1047.9 213.3 1052.1 217.4C1056.3 221.5 1060.9 227.0 1064.6 232.4C1068.3 237.8 1071.8 244.1 1074.5 249.9C1077.2 255.7 1079.3 261.9 1080.8 267.3C1082.3 272.7 1083.1 277.7 1083.3 282.3C1083.5 286.9 1083.2 290.1 1082.0 294.7C1080.8 299.3 1078.7 304.7 1075.8 309.7C1072.9 314.7 1068.5 319.7 1064.6 324.7C1060.6 329.7 1055.0 336.3 1052.1 339.6C1049.2 342.9 1047.8 343.8 1047.0 344.6L1000 380L953.6 402.3C951.3 403.4 946.4 405.9 939.9 408.6C933.4 411.3 923.2 415.5 914.9 418.6C906.6 421.7 898.4 423.8 890.0 427.3C881.6 430.8 873.0 436.1 864.6 439.8C856.2 443.5 847.9 446.4 839.6 449.7C831.3 453.0 823.0 456.6 814.7 459.7C806.4 462.8 797.2 466.1 789.8 468.4C782.3 470.7 775.8 472.1 770.0 473.4C764.2 474.7 757.3 475.6 754.8 476.0L714.9 389.9Z"/></clipPath><filter id="dF1" filterUnits="userSpaceOnUse" x="690" y="180" width="420" height="340"><feGaussianBlur stdDeviation="9"/></filter><filter id="dF4" filterUnits="userSpaceOnUse" x="690" y="180" width="420" height="340"><feGaussianBlur stdDeviation="1.3"/></filter><filter id="dF5" filterUnits="userSpaceOnUse" x="690" y="180" width="420" height="340"><feGaussianBlur stdDeviation="6"/></filter><filter id="dF3" filterUnits="userSpaceOnUse" x="690" y="180" width="420" height="340"><feGaussianBlur stdDeviation="3"/></filter><filter id="dF2" filterUnits="userSpaceOnUse" x="690" y="180" width="420" height="340"><feGaussianBlur stdDeviation="11"/></filter><g clip-path="url(#dC)"><path d="M714.9 389.9C715.2 389.5 714.8 389.9 717.0 387.8C719.2 385.8 724.0 381.4 728.3 377.6C732.5 373.8 737.8 369.2 742.5 365.2C747.2 361.2 751.9 357.5 756.6 353.5C761.3 349.5 766.1 345.2 770.8 341.4C775.5 337.6 780.3 334.3 785.0 330.6C789.7 326.9 794.4 323.0 799.1 319.2C803.8 315.4 809.0 311.4 813.3 308.0C817.5 304.6 821.2 301.6 824.6 299.0C828.0 296.4 830.1 295.0 833.4 292.2C836.7 289.4 839.4 286.7 844.6 282.4C849.8 278.1 858.0 271.6 864.6 266.2C871.2 260.8 878.6 254.4 884.5 250.0C890.4 245.6 894.9 242.7 900.0 239.6C905.1 236.5 908.2 234.9 914.9 231.6C921.5 228.3 931.6 223.3 939.9 219.9C948.2 216.5 956.5 213.6 964.8 211.2C973.1 208.8 981.5 207.1 989.8 205.5C998.1 203.9 1008.9 202.3 1014.7 201.7C1020.5 201.1 1020.6 200.9 1024.7 202.0C1028.8 203.1 1037.1 207.0 1039.6 208.0C1041.7 209.6 1047.9 213.3 1052.1 217.4C1056.3 221.5 1060.9 227.0 1064.6 232.4C1068.3 237.8 1071.8 244.1 1074.5 249.9C1077.2 255.7 1079.3 261.9 1080.8 267.3C1082.3 272.7 1083.1 277.7 1083.3 282.3C1083.5 286.9 1083.2 290.1 1082.0 294.7C1080.8 299.3 1078.7 304.7 1075.8 309.7C1072.9 314.7 1068.5 319.7 1064.6 324.7C1060.6 329.7 1055.0 336.3 1052.1 339.6C1049.2 342.9 1047.8 343.8 1047.0 344.6L1000 380L953.6 402.3C951.3 403.4 946.4 405.9 939.9 408.6C933.4 411.3 923.2 415.5 914.9 418.6C906.6 421.7 898.4 423.8 890.0 427.3C881.6 430.8 873.0 436.1 864.6 439.8C856.2 443.5 847.9 446.4 839.6 449.7C831.3 453.0 823.0 456.6 814.7 459.7C806.4 462.8 797.2 466.1 789.8 468.4C782.3 470.7 775.8 472.1 770.0 473.4C764.2 474.7 757.3 475.6 754.8 476.0L714.9 389.9Z" fill="#ff0000"/><path d="M750.0 410.0C752.2 408.0 758.5 402.1 763.0 398.0C767.5 393.9 770.4 391.5 777.3 385.6C784.2 379.7 795.0 369.7 804.2 362.8C813.4 355.9 823.5 349.3 832.5 344.4C841.5 339.5 848.9 336.5 858.5 333.2C868.1 329.9 880.4 327.5 890.0 324.6C899.6 321.7 905.1 320.3 915.9 316.0C926.7 311.7 941.3 305.5 955.0 299.0C968.7 292.5 990.8 280.7 998.0 277.0" stroke="#ff5c5c" stroke-width="17" fill="none" filter="url(#dF1)"/><path d="M789.8 468.4C793.9 466.9 806.4 462.8 814.7 459.7C823.0 456.6 831.3 453.0 839.6 449.7C847.9 446.4 856.2 443.5 864.6 439.8C873.0 436.1 881.6 430.8 890.0 427.3C898.4 423.8 906.6 421.7 914.9 418.6C923.2 415.5 933.4 411.3 939.9 408.6C946.4 405.9 951.3 403.4 953.6 402.3L1000 388" stroke="#000" stroke-width="16" fill="none" filter="url(#dF2)" opacity=".9"/><path d="M1039.6 208.0C1041.7 209.6 1047.9 213.3 1052.1 217.4C1056.3 221.5 1060.9 227.0 1064.6 232.4C1068.3 237.8 1071.8 244.1 1074.5 249.9C1077.2 255.7 1079.3 261.9 1080.8 267.3C1082.3 272.7 1083.1 277.7 1083.3 282.3C1083.5 286.9 1083.2 290.1 1082.0 294.7C1080.8 299.3 1078.7 304.7 1075.8 309.7C1072.9 314.7 1068.5 319.7 1064.6 324.7C1060.6 329.7 1055.0 336.3 1052.1 339.6C1049.2 342.9 1047.8 343.8 1047.0 344.6" stroke="#7a0000" stroke-width="3.4" fill="none" filter="url(#dF4)" opacity=".75"/><path d="M1079 300C1072 318 1060 332 1046 346L1020 372" stroke="#5a0000" stroke-width="13" fill="none" filter="url(#dF5)" opacity=".75"/></g><path d="M714.9 389.9C715.2 389.5 714.8 389.9 717.0 387.8C719.2 385.8 724.0 381.4 728.3 377.6C732.5 373.8 737.8 369.2 742.5 365.2C747.2 361.2 751.9 357.5 756.6 353.5C761.3 349.5 766.1 345.2 770.8 341.4C775.5 337.6 780.3 334.3 785.0 330.6C789.7 326.9 794.4 323.0 799.1 319.2C803.8 315.4 809.0 311.4 813.3 308.0C817.5 304.6 821.2 301.6 824.6 299.0C828.0 296.4 830.1 295.0 833.4 292.2C836.7 289.4 839.4 286.7 844.6 282.4C849.8 278.1 858.0 271.6 864.6 266.2C871.2 260.8 878.6 254.4 884.5 250.0C890.4 245.6 894.9 242.7 900.0 239.6C905.1 236.5 908.2 234.9 914.9 231.6C921.5 228.3 931.6 223.3 939.9 219.9C948.2 216.5 956.5 213.6 964.8 211.2C973.1 208.8 981.5 207.1 989.8 205.5C998.1 203.9 1008.9 202.3 1014.7 201.7C1020.5 201.1 1020.6 200.9 1024.7 202.0C1028.8 203.1 1037.1 207.0 1039.6 208.0C1035.4 208.8 1023.0 210.8 1014.7 213.0C1006.4 215.2 998.1 218.0 989.8 221.2C981.5 224.4 973.1 228.0 964.8 232.2C956.5 236.4 948.2 241.2 939.9 246.4C931.6 251.6 923.2 257.7 914.9 263.6C906.6 269.5 896.5 277.1 890.0 281.8C883.5 286.5 880.0 289.2 875.8 292.0C871.6 294.8 867.2 297.2 864.6 298.7C862.0 300.2 863.8 299.0 860.0 300.8C856.2 302.6 847.0 306.5 841.6 309.3C836.2 312.1 832.1 314.7 827.4 317.5C822.7 320.3 818.0 323.2 813.3 326.3C808.6 329.4 803.8 332.5 799.1 336.0C794.4 339.5 789.7 343.3 785.0 347.3C780.3 351.3 775.5 355.6 770.8 360.2C766.1 364.8 760.1 371.0 756.6 374.6C753.1 378.2 752.2 379.0 749.6 382.0C747.0 385.0 742.5 390.7 741.1 392.4L714.9 389.9Z" fill="#0000ff"/><clipPath id="dC2"><path d="M714.9 389.9C715.2 389.5 714.8 389.9 717.0 387.8C719.2 385.8 724.0 381.4 728.3 377.6C732.5 373.8 737.8 369.2 742.5 365.2C747.2 361.2 751.9 357.5 756.6 353.5C761.3 349.5 766.1 345.2 770.8 341.4C775.5 337.6 780.3 334.3 785.0 330.6C789.7 326.9 794.4 323.0 799.1 319.2C803.8 315.4 809.0 311.4 813.3 308.0C817.5 304.6 821.2 301.6 824.6 299.0C828.0 296.4 830.1 295.0 833.4 292.2C836.7 289.4 839.4 286.7 844.6 282.4C849.8 278.1 858.0 271.6 864.6 266.2C871.2 260.8 878.6 254.4 884.5 250.0C890.4 245.6 894.9 242.7 900.0 239.6C905.1 236.5 908.2 234.9 914.9 231.6C921.5 228.3 931.6 223.3 939.9 219.9C948.2 216.5 956.5 213.6 964.8 211.2C973.1 208.8 981.5 207.1 989.8 205.5C998.1 203.9 1008.9 202.3 1014.7 201.7C1020.5 201.1 1020.6 200.9 1024.7 202.0C1028.8 203.1 1037.1 207.0 1039.6 208.0C1035.4 208.8 1023.0 210.8 1014.7 213.0C1006.4 215.2 998.1 218.0 989.8 221.2C981.5 224.4 973.1 228.0 964.8 232.2C956.5 236.4 948.2 241.2 939.9 246.4C931.6 251.6 923.2 257.7 914.9 263.6C906.6 269.5 896.5 277.1 890.0 281.8C883.5 286.5 880.0 289.2 875.8 292.0C871.6 294.8 867.2 297.2 864.6 298.7C862.0 300.2 863.8 299.0 860.0 300.8C856.2 302.6 847.0 306.5 841.6 309.3C836.2 312.1 832.1 314.7 827.4 317.5C822.7 320.3 818.0 323.2 813.3 326.3C808.6 329.4 803.8 332.5 799.1 336.0C794.4 339.5 789.7 343.3 785.0 347.3C780.3 351.3 775.5 355.6 770.8 360.2C766.1 364.8 760.1 371.0 756.6 374.6C753.1 378.2 752.2 379.0 749.6 382.0C747.0 385.0 742.5 390.7 741.1 392.4L714.9 389.9Z"/></clipPath><g clip-path="url(#dC2)"><path d="M714.9 389.9C715.2 389.5 714.8 389.9 717.0 387.8C719.2 385.8 724.0 381.4 728.3 377.6C732.5 373.8 737.8 369.2 742.5 365.2C747.2 361.2 751.9 357.5 756.6 353.5C761.3 349.5 766.1 345.2 770.8 341.4C775.5 337.6 780.3 334.3 785.0 330.6C789.7 326.9 794.4 323.0 799.1 319.2C803.8 315.4 809.0 311.4 813.3 308.0C817.5 304.6 821.2 301.6 824.6 299.0C828.0 296.4 830.1 295.0 833.4 292.2C836.7 289.4 839.4 286.7 844.6 282.4C849.8 278.1 858.0 271.6 864.6 266.2C871.2 260.8 878.6 254.4 884.5 250.0C890.4 245.6 894.9 242.7 900.0 239.6C905.1 236.5 908.2 234.9 914.9 231.6C921.5 228.3 931.6 223.3 939.9 219.9C948.2 216.5 956.5 213.6 964.8 211.2C973.1 208.8 981.5 207.1 989.8 205.5C998.1 203.9 1008.9 202.3 1014.7 201.7C1020.5 201.1 1020.6 200.9 1024.7 202.0C1028.8 203.1 1037.1 207.0 1039.6 208.0" stroke="#0000a0" stroke-width="7" fill="none" filter="url(#dF3)" opacity=".8"/></g><path d="M837.4 288.5C839.7 288.1 846.7 286.2 851.0 286.2C855.3 286.2 859.4 287.4 863.4 288.5C867.4 289.6 870.9 290.6 874.7 293.0C878.5 295.4 882.2 299.0 886.0 303.2C889.8 307.4 893.7 312.4 897.4 318.0C901.1 323.6 904.7 330.0 908.0 337.0C911.3 344.0 914.8 352.0 917.0 360.0C919.2 368.0 921.1 377.7 921.5 385.0C921.9 392.3 920.9 398.4 919.5 404.0C918.1 409.6 914.1 416.1 913.0 418.5M834.0 291.9C836.3 291.8 843.8 290.9 847.6 291.3C851.4 291.7 853.8 293.0 856.6 294.2C859.4 295.4 861.2 296.4 864.6 298.7C868.0 301.0 872.7 304.0 877.0 307.8C881.3 311.6 886.4 315.9 890.6 321.3C894.8 326.7 898.4 333.2 902.0 340.0C905.6 346.8 909.5 354.7 912.0 362.0C914.5 369.3 916.3 377.3 917.0 384.0C917.7 390.7 917.0 396.2 916.0 402.0C915.0 407.8 911.8 416.2 911.0 419.0" stroke="#46101c" stroke-width="0.6" fill="none" opacity=".75"/><path d="M1039.6 208.0C1041.7 209.6 1047.9 213.3 1052.1 217.4C1056.3 221.5 1060.9 227.0 1064.6 232.4C1068.3 237.8 1071.8 244.1 1074.5 249.9C1077.2 255.7 1079.3 261.9 1080.8 267.3C1082.3 272.7 1083.1 277.7 1083.3 282.3C1083.5 286.9 1083.2 290.1 1082.0 294.7C1080.8 299.3 1078.7 304.7 1075.8 309.7C1072.9 314.7 1068.5 319.7 1064.6 324.7C1060.6 329.7 1055.0 336.3 1052.1 339.6C1049.2 342.9 1047.8 343.8 1047.0 344.6" stroke="#b00000" stroke-width="0.8" fill="none"/><path d="M705.5 412.3C705.8 408.8 706.4 403.7 708.0 400.0C709.6 396.3 711.7 392.0 714.9 389.9C718.1 387.8 723.0 386.8 727.4 387.2C731.8 387.6 737.0 390.0 741.1 392.4C745.2 394.8 748.9 398.3 752.0 401.6C755.1 404.9 757.3 408.2 759.8 412.3C762.3 416.4 764.9 421.4 767.0 426.0C769.1 430.6 771.1 436.0 772.3 439.8C773.5 443.6 773.8 446.1 774.0 449.0C774.2 451.9 773.9 454.5 773.5 457.2C773.1 459.9 772.4 462.7 771.4 465.0C770.4 467.3 768.9 469.3 767.3 470.9C765.7 472.5 763.7 473.8 761.6 474.6C759.5 475.4 757.2 476.0 754.8 475.9C752.4 475.8 749.5 475.0 747.0 474.0C744.5 473.0 742.9 471.9 739.9 469.7C736.9 467.5 732.3 463.9 729.0 460.6C725.7 457.3 722.6 453.2 719.9 449.7C717.2 446.2 714.9 442.9 713.0 439.6C711.1 436.3 709.9 432.9 708.7 429.8C707.5 426.7 706.5 423.9 706.0 421.0C705.5 418.1 705.2 415.8 705.5 412.3Z" fill="url(#dN)" stroke="#3a1a5a" stroke-width="1.1"/><path d="M707.1 413.2C707.4 409.8 707.9 405.0 709.4 401.4C710.9 397.9 712.9 393.8 716.0 391.8C719.1 389.7 723.8 388.8 728.0 389.2C732.1 389.6 737.1 391.9 741.1 394.2C745.0 396.5 748.5 399.8 751.5 402.9C754.4 406.1 756.5 409.3 758.9 413.2C761.3 417.0 763.8 421.9 765.8 426.2C767.8 430.6 769.7 435.8 770.8 439.4C772.0 443.1 772.3 445.4 772.5 448.2C772.7 451.0 772.4 453.5 772.0 456.0C771.6 458.6 771.0 461.3 770.0 463.5C769.0 465.7 767.6 467.6 766.1 469.1C764.5 470.7 762.6 471.9 760.6 472.7C758.6 473.5 756.5 474.0 754.1 473.9C751.8 473.8 749.1 473.1 746.7 472.1C744.3 471.1 742.8 470.1 739.9 468.0C737.0 465.8 732.7 462.5 729.5 459.3C726.3 456.1 723.4 452.2 720.8 448.9C718.3 445.5 716.0 442.4 714.2 439.2C712.4 436.1 711.2 432.8 710.1 429.9C709.0 426.9 708.0 424.3 707.5 421.5C707.0 418.7 706.7 416.5 707.1 413.2Z" fill="none" stroke="#20207a" stroke-width="0.5"/><path d="M741 469.4Q755 468.6 769 464.6Q767 472.6 757 474.6Q748 474.6 741 469.4Z" fill="#f00000"/><path d="M741.1 392.4C752 401.6 767 426 772.3 439.8C775 450 774 462 767.3 470.9C763 475 757 476.4 751 475.4" stroke="#7a1a1a" stroke-width="1.3" fill="none"/><ellipse cx="0" cy="0" rx="53.8" ry="22.6" transform="translate(1006.4 347.6) rotate(-37)" fill="url(#dV)" stroke="#9c1010" stroke-width="0.6"/><ellipse cx="0" cy="0" rx="53.2" ry="21.8" transform="translate(997.2 341.4) rotate(-37)" fill="#e40000" stroke="#8a1414" stroke-width="0.6"/><ellipse cx="0" cy="0" rx="49.4" ry="18.6" transform="translate(996.6 341) rotate(-37)" fill="#e80000" stroke="#8a1414" stroke-width="0.5"/><path d="M978.2 332.8L1014.6 313.8" stroke="#7a1414" stroke-width="5.8" stroke-linecap="round" fill="none"/><path d="M978.2 332.8L1014.6 313.8" stroke="#df0000" stroke-width="4.8" stroke-linecap="round" fill="none"/><path d="M978.0 333.3L1012.0 315.7" stroke="#3a1070" stroke-width="3.6" stroke-linecap="round" fill="none"/><path d="M978.0 333.3L1012.0 315.7" stroke="#0404ea" stroke-width="2.7" stroke-linecap="round" fill="none"/><path d="M964.2 350.8L1028 316" stroke="#7a1414" stroke-width="5.8" stroke-linecap="round" fill="none"/><path d="M964.2 350.8L1028 316" stroke="#df0000" stroke-width="4.8" stroke-linecap="round" fill="none"/><path d="M964.0 351.3L1025.4 317.9" stroke="#3a1070" stroke-width="3.6" stroke-linecap="round" fill="none"/><path d="M964.0 351.3L1025.4 317.9" stroke="#0404ea" stroke-width="2.7" stroke-linecap="round" fill="none"/><path d="M964.2 365.6L1028 330.2" stroke="#7a1414" stroke-width="5.8" stroke-linecap="round" fill="none"/><path d="M964.2 365.6L1028 330.2" stroke="#df0000" stroke-width="4.8" stroke-linecap="round" fill="none"/><path d="M964.0 366.1L1025.4 332.1" stroke="#3a1070" stroke-width="3.6" stroke-linecap="round" fill="none"/><path d="M964.0 366.1L1025.4 332.1" stroke="#0404ea" stroke-width="2.7" stroke-linecap="round" fill="none"/><path d="M978.2 369.4L1014.6 349.6" stroke="#7a1414" stroke-width="5.8" stroke-linecap="round" fill="none"/><path d="M978.2 369.4L1014.6 349.6" stroke="#df0000" stroke-width="4.8" stroke-linecap="round" fill="none"/><path d="M978.0 369.9L1012.0 351.5" stroke="#3a1070" stroke-width="3.6" stroke-linecap="round" fill="none"/><path d="M978.0 369.9L1012.0 351.5" stroke="#0404ea" stroke-width="2.7" stroke-linecap="round" fill="none"/></svg>
</body></html>
